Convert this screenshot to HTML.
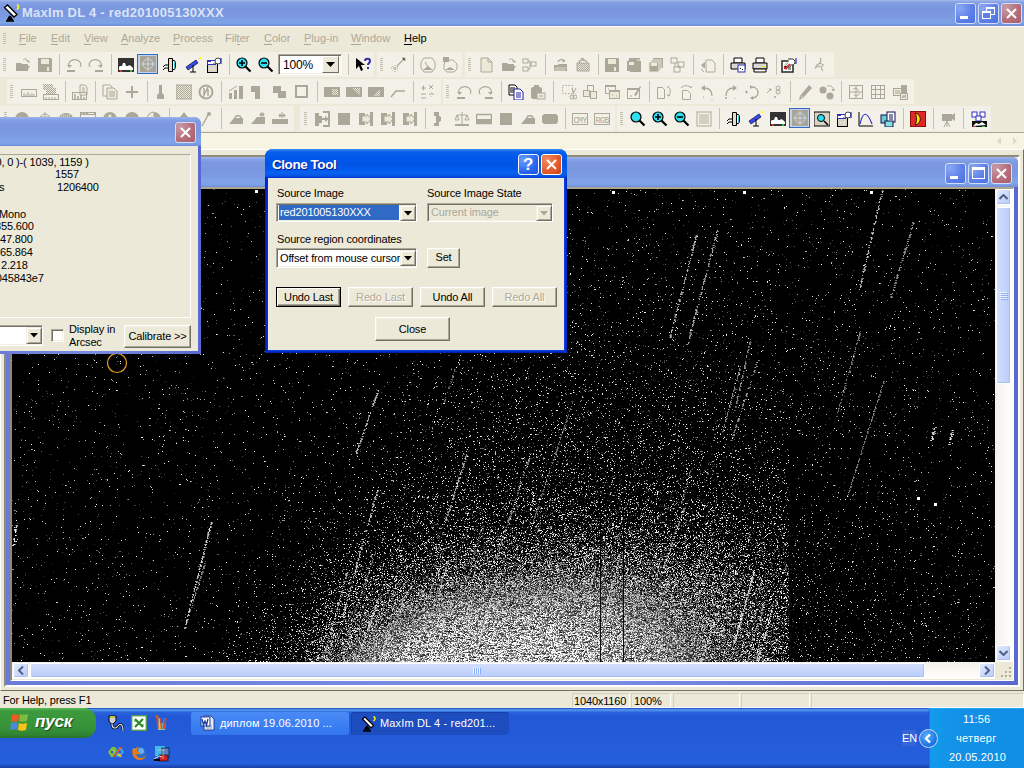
<!DOCTYPE html><html><head><meta charset="utf-8"><style>*{margin:0;padding:0;box-sizing:border-box}
html,body{width:1024px;height:768px;overflow:hidden;background:#ECE9D8;font-family:"Liberation Sans",sans-serif;font-size:11px;color:#000;position:relative;letter-spacing:-0.15px}
.a{position:absolute}
.nw{white-space:nowrap}
#title{left:0;top:0;width:1024px;height:26px;background:linear-gradient(#a7bdef 0,#93ade9 1px,#819ee2 3px,#7a96df 8px,#7a97df 14px,#7ea1e5 21px,#7fa4e6 23px,#7492dd 25px,#6d86d8 26px)}
.tt{font-weight:bold;font-size:13px;color:#d9e3f7;letter-spacing:0.25px}
.tbtn{width:21px;height:21px;border:1px solid #d3ddf6;border-radius:3px;background:radial-gradient(circle at 20% 20%,#8aa8f3,#5c7fe8 60%,#4a6fe3)}
.tbtn.x{background:radial-gradient(circle at 20% 20%,#c79aa6,#b46c79 60%,#a85e6c)}
.menu{top:32px;color:#aca899;letter-spacing:0}
.menu u{text-decoration:none;border-bottom:1px solid #aca899}
.btn{background:linear-gradient(#fff,#ecebe6 20%,#e3e1d9 80%,#d6d0c5);border:1px solid #003c74;border-radius:3px;text-align:center}
.cbtn{background:#ece9d8;border:1px solid;border-color:#fff #716f64 #716f64 #fff;box-shadow:inset -1px -1px #aca899, inset 1px 1px #f1efe2;text-align:center}
.cbtn.def{border:1px solid #000;box-shadow:inset 1px 1px #fff,inset -1px -1px #716f64,inset -2px -2px #aca899}
.dis{color:#aca899;text-shadow:1px 1px #fff}
.sunk{border:1px solid;border-color:#aca899 #fff #fff #aca899;box-shadow:inset 1px 1px #716f64,inset -1px -1px #f1efe2}
.ddb{background:#ece9d8;border:1px solid;border-color:#f1efe2 #716f64 #716f64 #f1efe2;box-shadow:inset 1px 1px #fff,inset -1px -1px #aca899}
.sbb{border:1px solid #fff;border-radius:2px;background:linear-gradient(135deg,#e2ebfd,#c8d7fb 60%,#b8cbf7);box-shadow:inset -1px -1px #a9bff0}
.sp{height:15px;border:1px solid;border-color:#d4d0c0 #fff #fff #d4d0c0}
</style></head><body>
<svg width="0" height="0" style="position:absolute"><defs><pattern id="hp" width="2" height="2" patternUnits="userSpaceOnUse"><rect width="2" height="2" fill="#ece9d8"/><rect width="1" height="1" fill="#aca899"/><rect x="1" y="1" width="1" height="1" fill="#aca899"/></pattern></defs></svg>
<div id="title" class="a">
  <svg class="a" style="left:3px;top:4px" width="17" height="18" viewBox="0 0 17 18"><path d="M1.5 3.5 L4.5 1 L14 10.5 L11 13 Z" fill="#fff" stroke="#000" stroke-width="1.3"/><path d="M7 12 L4 17 M7 12 L10 17 M7 12 V17 M3 17 H11" stroke="#000" stroke-width="1.7"/><path d="M14 0.5c2 1 2 3.5 0 5" stroke="#ff0" stroke-width="1.6" fill="none"/></svg>
  <div class="a tt nw" style="left:22px;top:5px">MaxIm DL 4 - red201005130XXX</div>
  <div class="a tbtn" style="left:955px;top:3px"><div class="a" style="left:4px;top:12px;width:8px;height:3px;background:#fff"></div></div>
  <div class="a tbtn" style="left:978px;top:3px">
    <div class="a" style="left:7px;top:3px;width:9px;height:8px;border:1px solid #fff;border-top-width:2px"></div>
    <div class="a" style="left:3px;top:7px;width:9px;height:8px;border:1px solid #fff;border-top-width:2px;background:#5e80e8"></div>
  </div>
  <div class="a tbtn x" style="left:1001px;top:3px">
    <svg class="a" style="left:3px;top:3px" width="13" height="13"><path d="M2 2 L11 11 M11 2 L2 11" stroke="#fff" stroke-width="2"/></svg>
  </div>
</div>
<div class="a" style="left:0;top:26px;width:1024px;height:1px;background:#fff"></div>
<div class="a" style="left:3px;top:33px;width:3px;height:12px;background:repeating-linear-gradient(#c3bfae 0 1px,transparent 1px 2px)"></div>
<div class="a menu nw" style="left:19px"><u>F</u>ile</div>
<div class="a menu nw" style="left:51px"><u>E</u>dit</div>
<div class="a menu nw" style="left:84px"><u>V</u>iew</div>
<div class="a menu nw" style="left:121px"><u>A</u>nalyze</div>
<div class="a menu nw" style="left:173px"><u>P</u>rocess</div>
<div class="a menu nw" style="left:225px">Fil<u>t</u>er</div>
<div class="a menu nw" style="left:264px"><u>C</u>olor</div>
<div class="a menu nw" style="left:304px"><u>P</u>lug-in</div>
<div class="a menu nw" style="left:351px"><u>W</u>indow</div>
<div class="a menu nw" style="left:404px;color:#000"><span style="border-bottom:1px solid #000">H</span>elp</div>

<div class="a" style="left:0px;top:52px;width:374px;height:25px;background:#f3f1e7"></div>
<div class="a" style="left:377px;top:52px;width:85px;height:25px;background:#f3f1e7"></div>
<div class="a" style="left:465px;top:52px;width:369px;height:25px;background:#f3f1e7"></div>
<div class="a" style="left:3px;top:58px;width:3px;height:14px;background:repeating-linear-gradient(#c3bfae 0 1px,transparent 1px 2px)"></div>
<div class="a" style="left:380px;top:58px;width:3px;height:14px;background:repeating-linear-gradient(#c3bfae 0 1px,transparent 1px 2px)"></div>
<div class="a" style="left:468px;top:58px;width:3px;height:14px;background:repeating-linear-gradient(#c3bfae 0 1px,transparent 1px 2px)"></div>
<div class="a" style="left:7px;top:79px;width:434px;height:25px;background:#f3f1e7"></div>
<div class="a" style="left:443px;top:79px;width:471px;height:25px;background:#f3f1e7"></div>
<div class="a" style="left:10px;top:85px;width:3px;height:14px;background:repeating-linear-gradient(#c3bfae 0 1px,transparent 1px 2px)"></div>
<div class="a" style="left:446px;top:85px;width:3px;height:14px;background:repeating-linear-gradient(#c3bfae 0 1px,transparent 1px 2px)"></div>
<div class="a" style="left:0px;top:106px;width:294px;height:25px;background:#f3f1e7"></div>
<div class="a" style="left:300px;top:106px;width:315px;height:25px;background:#f3f1e7"></div>
<div class="a" style="left:617px;top:106px;width:374px;height:25px;background:#f3f1e7"></div>
<div class="a" style="left:4px;top:112px;width:3px;height:14px;background:repeating-linear-gradient(#c3bfae 0 1px,transparent 1px 2px)"></div>
<div class="a" style="left:304px;top:112px;width:3px;height:14px;background:repeating-linear-gradient(#c3bfae 0 1px,transparent 1px 2px)"></div>
<div class="a" style="left:620px;top:112px;width:3px;height:14px;background:repeating-linear-gradient(#c3bfae 0 1px,transparent 1px 2px)"></div>
<svg class="a" style="left:15px;top:57px" width="16" height="16" viewBox="0 0 16 16"><path d="M1 6h5l1 1h6v7H1z" fill="#aca899"/><path d="M3 9h12l-3 5H1z" fill="#aca899"/><path d="M8 3c2-2 5-1 5 2" stroke="#aca899" fill="none"/><path d="M11 4h3v2" stroke="#aca899" fill="none"/></svg>
<svg class="a" style="left:37px;top:57px" width="16" height="16" viewBox="0 0 16 16"><path d="M1 1h13l1 1v13H1z" fill="#aca899"/><rect x="4" y="2" width="8" height="5" fill="#ece9d8"/><rect x="10" y="10" width="2" height="4" fill="#ece9d8"/></svg>
<div class="a" style="left:59px;top:54px;width:1px;height:21px;background:#c5c2b2"></div>
<svg class="a" style="left:66px;top:57px" width="16" height="16" viewBox="0 0 16 16"><path d="M3 9 A6 5 0 1 1 14 10" stroke="#aca899" fill="none" stroke-width="1.2"/><path d="M1 8h5l-2.5 3z" fill="#aca899"/><rect x="1" y="13" width="8" height="2" fill="#aca899"/></svg>
<svg class="a" style="left:88px;top:57px" width="16" height="16" viewBox="0 0 16 16"><path d="M2 10 A6 5 0 1 1 13 9" stroke="#aca899" fill="none" stroke-width="1.2"/><path d="M10 8h5l-2.5 3z" fill="#aca899"/><rect x="7" y="13" width="8" height="2" fill="#aca899"/></svg>
<div class="a" style="left:111px;top:54px;width:1px;height:21px;background:#c5c2b2"></div>
<svg class="a" style="left:118px;top:57px" width="16" height="16" viewBox="0 0 16 16"><rect x="0" y="1" width="16" height="14" fill="#333"/><path d="M1 13 V10 L2 9 L4 9 L5 6 L7 6 L8 9 L10 9 L11 8 L13 9 L15 11 L15 13Z" fill="#fff"/><rect x="2" y="13" width="2" height="2" fill="#e03030"/><rect x="12" y="13" width="2" height="2" fill="#30c040"/></svg>
<svg class="a" style="left:162px;top:57px" width="16" height="16" viewBox="0 0 16 16"><path d="M6.5 1.5h4v13h-4z" fill="#e8dcc0" stroke="#000"/><path d="M10.5 3.5h2l1 2v5l-1 2h-2z" fill="#fff" stroke="#000"/><rect x="12" y="5" width="1" height="6" fill="#3cd"/><path d="M1 10l2-2h3M1 13l2-2h3" stroke="#000" fill="none"/></svg>
<svg class="a" style="left:185px;top:57px" width="16" height="16" viewBox="0 0 16 16"><path d="M1 10 L11 3 L13 6 L3 13Z" fill="#3a4ad8" stroke="#1a1a70" stroke-width=".8"/><path d="M8 8v7M5 15h6" stroke="#000"/><rect x="14" y="0" width="2" height="2" fill="#ff0"/></svg>
<svg class="a" style="left:206px;top:57px" width="16" height="16" viewBox="0 0 16 16"><rect x="1.5" y="6.5" width="10" height="9" fill="#d8d4c4" stroke="#000"/><path d="M4 12h1M8 11h1M7 13h1" stroke="#fff"/><rect x="1.5" y="3.5" width="8" height="4" fill="#fff" stroke="#3030c0"/><rect x="2" y="4" width="3" height="1" fill="#3030c0"/><circle cx="12" cy="4" r="3" fill="#fff" stroke="#444"/><path d="M15 1v6" stroke="#3030c0" stroke-width="1.2"/><path d="M7 7l3-2" stroke="#888"/></svg>
<div class="a" style="left:229px;top:54px;width:1px;height:21px;background:#c5c2b2"></div>
<svg class="a" style="left:236px;top:57px" width="16" height="16" viewBox="0 0 16 16"><circle cx="6" cy="6" r="5" fill="#2ee0f0" stroke="#000" stroke-width="1.2"/><path d="M3 6h6M6 3v6" stroke="#000" stroke-width="1.6"/><path d="M9.5 9.5l5 5" stroke="#000" stroke-width="2.2"/></svg>
<svg class="a" style="left:258px;top:57px" width="16" height="16" viewBox="0 0 16 16"><circle cx="6" cy="6" r="5" fill="#2ee0f0" stroke="#000" stroke-width="1.2"/><path d="M3 6h6" stroke="#000" stroke-width="1.6"/><path d="M9.5 9.5l5 5" stroke="#000" stroke-width="2.2"/></svg>
<div class="a" style="left:348px;top:54px;width:1px;height:21px;background:#c5c2b2"></div>
<svg class="a" style="left:355px;top:57px" width="16" height="16" viewBox="0 0 16 16"><path d="M1 1 L1 12 L4 9 L6 14 L8 13 L6 8 L10 8Z" fill="#000"/><path d="M10 4c0-3 5-3 5 0 0 2-2 2-2 4" stroke="#3030a0" stroke-width="2" fill="none"/><rect x="12" y="10" width="2" height="2" fill="#3030a0"/></svg>
<svg class="a" style="left:390px;top:57px" width="16" height="16" viewBox="0 0 16 16"><path d="M7 9 L14 2" stroke="#aca899" stroke-width="1.3"/><path d="M12 1h3v3" stroke="#aca899"/><path d="M5 8v7M1 11h8M2 9l6 5M8 9l-6 5" stroke="#aca899" stroke-dasharray="1 1"/></svg>
<div class="a" style="left:413px;top:54px;width:1px;height:21px;background:#c5c2b2"></div>
<svg class="a" style="left:420px;top:57px" width="16" height="16" viewBox="0 0 16 16"><path d="M4 1h8l3 4v6l-3 4H4l-3-4V5z" fill="none" stroke="#aca899"/><path d="M3 13 L8 9 L13 13Z" fill="#aca899"/><path d="M8 10L5 5" stroke="#aca899"/></svg>
<svg class="a" style="left:442px;top:57px" width="16" height="16" viewBox="0 0 16 16"><path d="M4 3h7l4 4v5l-3 3H5l-3-3V7z" fill="none" stroke="#aca899"/><path d="M3 13 L8 10 L13 13Z" fill="#aca899"/><rect x="1" y="0" width="6" height="5" fill="#aca899"/></svg>
<svg class="a" style="left:479px;top:57px" width="16" height="16" viewBox="0 0 16 16"><path d="M2 1h7l4 4v10H2z" fill="#ece9d8" stroke="#aca899"/><path d="M9 1v4h4" stroke="#aca899" fill="none"/></svg>
<svg class="a" style="left:501px;top:57px" width="16" height="16" viewBox="0 0 16 16"><path d="M1 6h5l1 1h6v7H1z" fill="#aca899"/><path d="M3 9h12l-3 5H1z" fill="#aca899"/><path d="M8 3c2-2 5-1 5 2" stroke="#aca899" fill="none"/><path d="M11 4h3v2" stroke="#aca899" fill="none"/></svg>
<svg class="a" style="left:522px;top:57px" width="16" height="16" viewBox="0 0 16 16"><rect x="1" y="2" width="5" height="4" fill="none" stroke="#aca899"/><rect x="9" y="5" width="5" height="4" fill="none" stroke="#aca899"/><rect x="1" y="10" width="5" height="4" fill="none" stroke="#aca899"/><path d="M6 4h2v8H6M8 7h1" stroke="#aca899" fill="none"/></svg>
<div class="a" style="left:545px;top:54px;width:1px;height:21px;background:#c5c2b2"></div>
<svg class="a" style="left:553px;top:57px" width="16" height="16" viewBox="0 0 16 16"><path d="M1 8h4l1-1h8v7H1z" fill="#aca899"/><path d="M2 10h12l-2 4H1z" fill="#c4c0b0"/><path d="M5 5c1-3 5-3 6-1" stroke="#aca899" fill="none" stroke-width="1.3"/><path d="M9 2l3 2-3 1" stroke="#aca899" fill="none"/></svg>
<svg class="a" style="left:575px;top:57px" width="16" height="16" viewBox="0 0 16 16"><path d="M2 6h12v8H2z" fill="url(#hp)" stroke="#aca899"/><path d="M4 6c0-4 6-4 8-1" stroke="#aca899" fill="none" stroke-width="1.3"/><path d="M6 1l3 1-2 2" stroke="#aca899" fill="none"/></svg>
<div class="a" style="left:598px;top:54px;width:1px;height:21px;background:#c5c2b2"></div>
<svg class="a" style="left:604px;top:57px" width="16" height="16" viewBox="0 0 16 16"><path d="M1 1h13l1 1v13H1z" fill="#aca899"/><rect x="4" y="2" width="8" height="5" fill="#ece9d8"/><rect x="10" y="10" width="2" height="4" fill="#ece9d8"/></svg>
<svg class="a" style="left:626px;top:57px" width="16" height="16" viewBox="0 0 16 16"><path d="M3 1h11v3h1v11H4V4H1v10" fill="#aca899"/><rect x="1" y="4" width="10" height="10" fill="#aca899"/><rect x="3" y="5" width="5" height="3" fill="#ece9d8"/><path d="M12 2v2M14 2v2" stroke="#ece9d8"/></svg>
<svg class="a" style="left:648px;top:57px" width="16" height="16" viewBox="0 0 16 16"><rect x="5" y="1" width="10" height="10" fill="#aca899"/><rect x="3" y="3" width="10" height="10" fill="#aca899" stroke="#ece9d8"/><rect x="1" y="5" width="10" height="10" fill="#aca899" stroke="#ece9d8"/><rect x="3" y="6" width="6" height="3" fill="#ece9d8"/></svg>
<svg class="a" style="left:670px;top:57px" width="16" height="16" viewBox="0 0 16 16"><rect x="1" y="1" width="6" height="5" fill="none" stroke="#aca899"/><rect x="8" y="5" width="6" height="5" fill="none" stroke="#aca899"/><rect x="4" y="10" width="6" height="5" fill="none" stroke="#aca899"/><path d="M5 6v4M9 10V8" stroke="#aca899"/></svg>
<div class="a" style="left:693px;top:54px;width:1px;height:21px;background:#c5c2b2"></div>
<svg class="a" style="left:700px;top:57px" width="16" height="16" viewBox="0 0 16 16"><path d="M6 3h6l3 3v9H6z" fill="none" stroke="#aca899"/><path d="M1 8l4-3v6z" fill="#aca899"/><path d="M1 12l3 3M2 10h3" stroke="#aca899"/></svg>
<div class="a" style="left:723px;top:54px;width:1px;height:21px;background:#c5c2b2"></div>
<svg class="a" style="left:730px;top:57px" width="16" height="16" viewBox="0 0 16 16"><path d="M4 1h8v5H4z" fill="#fff" stroke="#000"/><path d="M1 6h14v6H1z" fill="#d8d8d8" stroke="#000"/><rect x="8" y="8" width="7" height="7" fill="#fff" stroke="#3030a0"/><rect x="10" y="11" width="1" height="1" fill="#000"/><rect x="12" y="12" width="1" height="1" fill="#000"/></svg>
<svg class="a" style="left:752px;top:57px" width="16" height="16" viewBox="0 0 16 16"><path d="M4 1h8v5H4z" fill="#fff" stroke="#000"/><path d="M1 6h14v6H1z" fill="#d8d8d8" stroke="#000"/><path d="M2 12h12v3H2z" fill="#fff" stroke="#000"/><rect x="10" y="9" width="3" height="1" fill="#ee0"/></svg>
<div class="a" style="left:776px;top:54px;width:1px;height:21px;background:#c5c2b2"></div>
<svg class="a" style="left:781px;top:57px" width="16" height="16" viewBox="0 0 16 16"><rect x="1" y="4" width="11" height="11" fill="#fff" stroke="#333" stroke-width="1.6"/><path d="M3 8l3-3 4 4-3 3z" fill="url(#hp)"/><path d="M7 2h5l2 2v2l-2 2H9" fill="#fff" stroke="#333"/><path d="M15 1v6" stroke="#3030c0" stroke-width="1.2"/><rect x="3" y="9" width="3" height="3" fill="#333"/><path d="M3 10l2 2 4-5" stroke="#f02020" stroke-width="1.4" fill="none"/><path d="M7 10h3M7 12h3" stroke="#333"/></svg>
<div class="a" style="left:805px;top:54px;width:1px;height:21px;background:#c5c2b2"></div>
<svg class="a" style="left:812px;top:57px" width="16" height="16" viewBox="0 0 16 16"><path d="M8 1l1 2-1 3 3 2-2 3 2 3M8 6l-3 2-2 4M8 9l-4 1" stroke="#aca899" stroke-width="1.4" fill="none" stroke-dasharray="2 0.6"/></svg>
<svg class="a" style="left:21px;top:84px" width="16" height="16" viewBox="0 0 16 16"><rect x="0.5" y="5.5" width="15" height="7" fill="none" stroke="#aca899"/><path d="M3 12V9M5 12v-2M7 12V8M9 12v-2M11 12V9M13 12v-2" stroke="#aca899"/></svg>
<svg class="a" style="left:43px;top:84px" width="16" height="16" viewBox="0 0 16 16"><rect x="0" y="0" width="10" height="6" fill="url(#hp)"/><rect x="3" y="4" width="10" height="6" fill="url(#hp)"/><rect x="0.5" y="10.5" width="15" height="5" fill="none" stroke="#aca899"/><path d="M3 15v-2M6 15v-2M9 15v-2M12 15v-2" stroke="#aca899"/></svg>
<div class="a" style="left:65px;top:81px;width:1px;height:21px;background:#c5c2b2"></div>
<svg class="a" style="left:72px;top:84px" width="16" height="16" viewBox="0 0 16 16"><path d="M8 1h5l2 2v8H8z" fill="none" stroke="#aca899"/><path d="M10 4h3M10 6h3M10 8h3" stroke="#aca899"/><rect x="0.5" y="8.5" width="14" height="7" fill="none" stroke="#aca899"/><path d="M3 15v-5M6 15v-3M9 15v-4M12 15v-2" stroke="#aca899" stroke-width="1.5"/></svg>
<div class="a" style="left:95px;top:81px;width:1px;height:21px;background:#c5c2b2"></div>
<svg class="a" style="left:102px;top:84px" width="16" height="16" viewBox="0 0 16 16"><path d="M1 1h7l2 2v9H1z" fill="none" stroke="#aca899"/><path d="M5 4h7l3 3v8H5z" fill="#ece9d8" stroke="#aca899"/><path d="M7 8h6M7 10h6M7 12h6" stroke="#aca899"/></svg>
<svg class="a" style="left:124px;top:84px" width="16" height="16" viewBox="0 0 16 16"><path d="M8 2v12M2 8h12" stroke="#aca899" stroke-width="2"/></svg>
<div class="a" style="left:147px;top:81px;width:1px;height:21px;background:#c5c2b2"></div>
<svg class="a" style="left:153px;top:84px" width="16" height="16" viewBox="0 0 16 16"><path d="M6 1h3v8l2 2v4H4v-4l2-2z" fill="#aca899"/></svg>
<svg class="a" style="left:176px;top:84px" width="16" height="16" viewBox="0 0 16 16"><rect x="0" y="1" width="16" height="14" fill="url(#hp)" stroke="#aca899"/><rect x="5" y="4" width="6" height="8" fill="url(#hp)"/></svg>
<svg class="a" style="left:198px;top:84px" width="16" height="16" viewBox="0 0 16 16"><circle cx="8" cy="8" r="6.5" fill="none" stroke="#aca899" stroke-width="2"/><path d="M10 3L5 13M6 4v7M10 5v7" stroke="#aca899" stroke-width="1.5"/></svg>
<div class="a" style="left:221px;top:81px;width:1px;height:21px;background:#c5c2b2"></div>
<svg class="a" style="left:228px;top:84px" width="16" height="16" viewBox="0 0 16 16"><rect x="1" y="9" width="3" height="6" fill="#aca899"/><rect x="6" y="6" width="3" height="9" fill="#aca899"/><rect x="11" y="2" width="4" height="13" fill="#aca899"/><path d="M1 7l8-5" stroke="#aca899"/></svg>
<svg class="a" style="left:250px;top:84px" width="16" height="16" viewBox="0 0 16 16"><rect x="1" y="2" width="9" height="6" fill="#aca899"/><rect x="5" y="5" width="5" height="10" fill="#aca899"/></svg>
<svg class="a" style="left:272px;top:84px" width="16" height="16" viewBox="0 0 16 16"><rect x="1" y="2" width="8" height="7" fill="#aca899"/><rect x="6" y="7" width="8" height="7" fill="#aca899"/></svg>
<svg class="a" style="left:294px;top:84px" width="16" height="16" viewBox="0 0 16 16"><rect x="2" y="2" width="11" height="11" fill="none" stroke="#aca899" stroke-width="2"/></svg>
<div class="a" style="left:317px;top:81px;width:1px;height:21px;background:#c5c2b2"></div>
<svg class="a" style="left:324px;top:84px" width="16" height="16" viewBox="0 0 16 16"><rect x="0" y="3" width="16" height="10" fill="#aca899"/><rect x="8" y="5" width="6" height="6" fill="url(#hp)"/></svg>
<svg class="a" style="left:346px;top:84px" width="16" height="16" viewBox="0 0 16 16"><rect x="0" y="3" width="16" height="10" fill="#aca899"/><path d="M6 4l8 7V4z" fill="url(#hp)"/></svg>
<svg class="a" style="left:368px;top:84px" width="16" height="16" viewBox="0 0 16 16"><rect x="0" y="3" width="16" height="10" fill="#aca899"/><path d="M5 12l7-7v7z" fill="url(#hp)"/></svg>
<svg class="a" style="left:390px;top:84px" width="16" height="16" viewBox="0 0 16 16"><path d="M1 13l5-6h9" stroke="#aca899" stroke-width="1.5" fill="none"/></svg>
<div class="a" style="left:413px;top:81px;width:1px;height:21px;background:#c5c2b2"></div>
<svg class="a" style="left:420px;top:84px" width="16" height="16" viewBox="0 0 16 16"><path d="M1 4h5M3.5 1.5v5M9 1l4 4M13 1l-4 4M1 10h5M9 10h5M11.5 8v0.5M11.5 12v0.5" stroke="#aca899"/><path d="M1 14h5" stroke="#aca899"/></svg>
<svg class="a" style="left:456px;top:84px" width="16" height="16" viewBox="0 0 16 16"><path d="M3 9 A6 5 0 1 1 14 10" stroke="#aca899" fill="none" stroke-width="1.2"/><path d="M1 8h5l-2.5 3z" fill="#aca899"/><rect x="1" y="13" width="8" height="2" fill="#aca899"/></svg>
<svg class="a" style="left:478px;top:84px" width="16" height="16" viewBox="0 0 16 16"><path d="M2 10 A6 5 0 1 1 13 9" stroke="#aca899" fill="none" stroke-width="1.2"/><path d="M10 8h5l-2.5 3z" fill="#aca899"/><rect x="7" y="13" width="8" height="2" fill="#aca899"/></svg>
<div class="a" style="left:501px;top:81px;width:1px;height:21px;background:#c5c2b2"></div>
<svg class="a" style="left:508px;top:84px" width="16" height="16" viewBox="0 0 16 16"><path d="M1 1h6l2 2v8H1z" fill="#fff" stroke="#000"/><path d="M2 4h5M2 6h5M2 8h5" stroke="#000"/><path d="M6 5h6l3 3v8H6z" fill="#fff" stroke="#2020a0"/><path d="M8 9h5M8 11h5M8 13h5" stroke="#2020a0"/></svg>
<svg class="a" style="left:530px;top:84px" width="16" height="16" viewBox="0 0 16 16"><rect x="1" y="3" width="11" height="12" rx="2" fill="#aca899"/><rect x="4" y="1" width="5" height="3" fill="#aca899"/><rect x="7" y="9" width="8" height="6" fill="#ece9d8" stroke="#aca899"/><path d="M9 12h4" stroke="#aca899"/></svg>
<div class="a" style="left:553px;top:81px;width:1px;height:21px;background:#c5c2b2"></div>
<svg class="a" style="left:561px;top:84px" width="16" height="16" viewBox="0 0 16 16"><rect x="1.5" y="1.5" width="10" height="8" fill="none" stroke="#aca899" stroke-dasharray="1.5 1.5"/><path d="M11 4l2 6M15 4l-3 6" stroke="#aca899"/><circle cx="11" cy="13" r="2" fill="none" stroke="#aca899"/><circle cx="14" cy="13" r="2" fill="none" stroke="#aca899"/></svg>
<svg class="a" style="left:582px;top:84px" width="16" height="16" viewBox="0 0 16 16"><rect x="5.5" y="1.5" width="6" height="6" fill="none" stroke="#aca899"/><rect x="1.5" y="6.5" width="6" height="6" fill="#ece9d8" stroke="#aca899"/><rect x="8.5" y="7.5" width="6" height="7" fill="#ece9d8" stroke="#aca899"/></svg>
<svg class="a" style="left:604px;top:84px" width="16" height="16" viewBox="0 0 16 16"><rect x="1.5" y="1.5" width="10" height="8" fill="none" stroke="#aca899"/><rect x="1" y="1" width="11" height="2" fill="#aca899"/><rect x="5.5" y="6.5" width="10" height="8" fill="#ece9d8" stroke="#aca899"/><rect x="5" y="6" width="11" height="2" fill="#aca899"/><path d="M8 11h1M12 12h1M4 5h1" stroke="#aca899"/></svg>
<svg class="a" style="left:626px;top:84px" width="16" height="16" viewBox="0 0 16 16"><rect x="1.5" y="4.5" width="12" height="10" fill="none" stroke="#aca899"/><rect x="1" y="4" width="13" height="2" fill="#aca899"/><path d="M8 11l6-9 1 1-5 9z" fill="#aca899"/><path d="M4 12h2" stroke="#aca899"/></svg>
<div class="a" style="left:649px;top:81px;width:1px;height:21px;background:#c5c2b2"></div>
<svg class="a" style="left:656px;top:84px" width="16" height="16" viewBox="0 0 16 16"><path d="M1.5 3.5h5l2 2v9h-7z" fill="none" stroke="#aca899"/><path d="M12 3c3 1 3 7 0 9M11 10l1 2 2-1M13 3l-2 0" stroke="#aca899" fill="none"/></svg>
<svg class="a" style="left:678px;top:84px" width="16" height="16" viewBox="0 0 16 16"><path d="M4.5 6.5h5l3 3v6h-8z" fill="none" stroke="#aca899"/><path d="M3 4c2-3 8-3 10 0M11 2l2 2 1-2" stroke="#aca899" fill="none"/></svg>
<svg class="a" style="left:700px;top:84px" width="16" height="16" viewBox="0 0 16 16"><path d="M4 4c5 0 8 2 8 8" stroke="#aca899" fill="none" stroke-width="1.3"/><path d="M1 4l4-3v6z" fill="#aca899"/><path d="M3 13h1M12 15v1" stroke="#aca899"/></svg>
<svg class="a" style="left:722px;top:84px" width="16" height="16" viewBox="0 0 16 16"><path d="M12 4c-5 0-8 2-8 8" stroke="#aca899" fill="none" stroke-width="1.3"/><path d="M15 4l-4-3v6z" fill="#aca899"/><path d="M3 14h2M4 13v2M13 14v1" stroke="#aca899"/></svg>
<svg class="a" style="left:744px;top:84px" width="16" height="16" viewBox="0 0 16 16"><path d="M8 3c4 0 6 3 6 6s-3 5-6 5" stroke="#aca899" fill="none" stroke-width="1.3"/><path d="M6 1l3 2-3 2zM9 12l-3 2 3 2z" fill="#aca899"/><path d="M1 8h3M2.5 6.5v3" stroke="#aca899"/></svg>
<svg class="a" style="left:766px;top:84px" width="16" height="16" viewBox="0 0 16 16"><path d="M1 9l4-4M3 5h2v2" stroke="#aca899" fill="none"/><circle cx="12" cy="4" r="2" fill="none" stroke="#aca899"/><circle cx="12" cy="8" r="2" fill="none" stroke="#aca899"/><path d="M8 13h2M9 12v2" stroke="#aca899"/></svg>
<div class="a" style="left:790px;top:81px;width:1px;height:21px;background:#c5c2b2"></div>
<svg class="a" style="left:797px;top:84px" width="16" height="16" viewBox="0 0 16 16"><path d="M12 1l3 3-9 10-4 2 1-4z" fill="#aca899"/><path d="M4 12l2 2" stroke="#ece9d8"/></svg>
<svg class="a" style="left:819px;top:84px" width="16" height="16" viewBox="0 0 16 16"><circle cx="4" cy="6" r="3.5" fill="#aca899"/><circle cx="11" cy="12" r="3.5" fill="#aca899"/><path d="M8 2c4-1 7 1 6 5M13 5l1 2 2-2" stroke="#aca899" fill="none"/></svg>
<div class="a" style="left:841px;top:81px;width:1px;height:21px;background:#c5c2b2"></div>
<svg class="a" style="left:848px;top:84px" width="16" height="16" viewBox="0 0 16 16"><rect x="1.5" y="1.5" width="13" height="13" fill="none" stroke="#aca899"/><path d="M8 1v14M1 8h14" stroke="#aca899"/><path d="M5 5c3-2 6 0 5 2M6 11c3 2 6 0 5-2" stroke="#aca899" fill="none"/></svg>
<svg class="a" style="left:870px;top:84px" width="16" height="16" viewBox="0 0 16 16"><rect x="1.5" y="1.5" width="13" height="13" fill="none" stroke="#aca899"/><path d="M5.5 1v14M10.5 1v14M1 5.5h14M1 10.5h14" stroke="#aca899"/></svg>
<svg class="a" style="left:892px;top:84px" width="16" height="16" viewBox="0 0 16 16"><rect x="9" y="1" width="6" height="9" fill="#aca899"/><rect x="1.5" y="4.5" width="8" height="7" fill="#ece9d8" stroke="#aca899"/><path d="M3 7h5M3 9h5" stroke="#aca899"/><rect x="8.5" y="9.5" width="7" height="6" fill="#ece9d8" stroke="#aca899"/><path d="M10 12h4l-1-1M14 13h-4l1 1" stroke="#aca899" fill="none"/></svg>
<svg class="a" style="left:14px;top:111px" width="16" height="16" viewBox="0 0 16 16"><circle cx="8" cy="8" r="7" fill="#aca899"/></svg>
<svg class="a" style="left:37px;top:111px" width="16" height="16" viewBox="0 0 16 16"><path d="M8 1v14M3 6h10" stroke="#aca899"/><path d="M3 8a5 5 0 0 1 10 0v7H3z" fill="none" stroke="#aca899"/></svg>
<svg class="a" style="left:58px;top:111px" width="16" height="16" viewBox="0 0 16 16"><path d="M1 14v-6c0-4 3-6 7-6s7 2 7 6v6z" fill="#aca899"/><path d="M3 4h10M3 6h10" stroke="#ece9d8" stroke-dasharray="1 1"/></svg>
<svg class="a" style="left:80px;top:111px" width="16" height="16" viewBox="0 0 16 16"><rect x="0.5" y="1.5" width="15" height="13" fill="none" stroke="#aca899"/><rect x="0" y="1" width="16" height="3" fill="#aca899"/><path d="M2 2.5h1M5 2.5h1M8 2.5h6" stroke="#ece9d8"/><path d="M3 12l3-3 3 2 4-3" stroke="#aca899" fill="none"/></svg>
<svg class="a" style="left:102px;top:111px" width="16" height="16" viewBox="0 0 16 16"><circle cx="8" cy="8" r="7" fill="#aca899"/><circle cx="8" cy="5" r="1.5" fill="#ece9d8"/></svg>
<svg class="a" style="left:124px;top:111px" width="16" height="16" viewBox="0 0 16 16"><circle cx="8" cy="8" r="7" fill="#aca899"/></svg>
<svg class="a" style="left:146px;top:111px" width="16" height="16" viewBox="0 0 16 16"><circle cx="8" cy="8" r="7" fill="#aca899"/><path d="M8 1a7 7 0 0 0 -7 7h7z" fill="#ece9d8"/><path d="M8 1a7 7 0 0 0 -7 7h7z" fill="none" stroke="#aca899"/></svg>
<div class="a" style="left:169px;top:108px;width:1px;height:21px;background:#c5c2b2"></div>
<svg class="a" style="left:176px;top:111px" width="16" height="16" viewBox="0 0 16 16"><path d="M8 1l7 9H1z" fill="#aca899"/></svg>
<svg class="a" style="left:198px;top:111px" width="16" height="16" viewBox="0 0 16 16"><circle cx="11" cy="3" r="2" fill="#aca899"/><path d="M10 4L4 15" stroke="#aca899" stroke-width="1.5"/></svg>
<div class="a" style="left:221px;top:108px;width:1px;height:21px;background:#c5c2b2"></div>
<svg class="a" style="left:228px;top:111px" width="16" height="16" viewBox="0 0 16 16"><path d="M1 13l5-6h9v6z" fill="#aca899"/><path d="M7 7c0-3 6-3 6 0" stroke="#aca899" fill="none" stroke-width="1.3"/></svg>
<svg class="a" style="left:250px;top:111px" width="16" height="16" viewBox="0 0 16 16"><path d="M1 13l6-7h8v7z" fill="#aca899"/><path d="M12 1v5M10 2l4 3M14 2l-4 3M9.5 3.5h5" stroke="#aca899"/></svg>
<svg class="a" style="left:272px;top:111px" width="16" height="16" viewBox="0 0 16 16"><rect x="0" y="8" width="16" height="5" fill="#aca899"/><path d="M10 1v6M7 3l6 3M13 3l-6 3M6.5 4.5h7" stroke="#aca899"/></svg>
<svg class="a" style="left:314px;top:111px" width="16" height="16" viewBox="0 0 16 16"><path d="M1 2h4v3h3v2l3 0 0-2 4 3-4 3v-2H8v3H5v3H1z" fill="#aca899"/><path d="M9 1h6v14H9" stroke="#aca899" stroke-width="2" fill="none"/></svg>
<svg class="a" style="left:336px;top:111px" width="16" height="16" viewBox="0 0 16 16"><rect x="2" y="2" width="12" height="12" fill="#aca899"/></svg>
<svg class="a" style="left:358px;top:111px" width="16" height="16" viewBox="0 0 16 16"><rect x="1" y="2" width="6" height="12" fill="#aca899"/><path d="M4 5h5V3l4 5-4 5v-2H4z" fill="#ece9d8" stroke="#aca899"/><rect x="12" y="1" width="3" height="14" fill="#aca899"/></svg>
<svg class="a" style="left:380px;top:111px" width="16" height="16" viewBox="0 0 16 16"><rect x="1" y="2" width="6" height="12" fill="#aca899"/><path d="M4 5h5V3l4 5-4 5v-2H4z" fill="#ece9d8" stroke="#aca899"/><rect x="12" y="1" width="3" height="14" fill="#aca899"/></svg>
<svg class="a" style="left:402px;top:111px" width="16" height="16" viewBox="0 0 16 16"><rect x="1" y="2" width="6" height="12" fill="#aca899"/><path d="M4 5h5V3l4 5-4 5v-2H4z" fill="#ece9d8" stroke="#aca899"/><rect x="12" y="1" width="3" height="14" fill="#aca899"/></svg>
<div class="a" style="left:425px;top:108px;width:1px;height:21px;background:#c5c2b2"></div>
<svg class="a" style="left:432px;top:111px" width="16" height="16" viewBox="0 0 16 16"><path d="M2 1h5v4l2 1v4l-2 1v4H2v-3h2V5H2z" fill="#aca899"/></svg>
<svg class="a" style="left:454px;top:111px" width="16" height="16" viewBox="0 0 16 16"><path d="M8 1v12M3 4h10M1 9l2-5 2 5zM11 9l2-5 2 5z" stroke="#aca899" fill="none"/><rect x="1" y="13" width="14" height="2" fill="#aca899"/></svg>
<svg class="a" style="left:476px;top:111px" width="16" height="16" viewBox="0 0 16 16"><rect x="0.5" y="3.5" width="15" height="9" fill="none" stroke="#aca899" stroke-width="1.5"/><rect x="1" y="8" width="14" height="4" fill="#aca899"/></svg>
<svg class="a" style="left:498px;top:111px" width="16" height="16" viewBox="0 0 16 16"><rect x="2" y="2" width="12" height="12" fill="#aca899"/></svg>
<svg class="a" style="left:520px;top:111px" width="16" height="16" viewBox="0 0 16 16"><path d="M1 13l5-6h9v6z" fill="#aca899"/><path d="M7 7c0-3 6-3 6 0" stroke="#aca899" fill="none" stroke-width="1.3"/></svg>
<svg class="a" style="left:542px;top:111px" width="16" height="16" viewBox="0 0 16 16"><path d="M2 3h12l2 2v6l-2 2H2l-2-2V5z" fill="#aca899"/></svg>
<div class="a" style="left:565px;top:108px;width:1px;height:21px;background:#c5c2b2"></div>
<svg class="a" style="left:572px;top:111px" width="16" height="16" viewBox="0 0 16 16"><rect x="0.5" y="2.5" width="15" height="11" fill="none" stroke="#aca899"/><text x="8" y="12" font-size="8.5" text-anchor="middle" fill="#aca899" font-family="Liberation Mono" letter-spacing="-0.8">CMY</text></svg>
<svg class="a" style="left:594px;top:111px" width="16" height="16" viewBox="0 0 16 16"><rect x="0.5" y="2.5" width="15" height="11" fill="none" stroke="#aca899"/><text x="8" y="12" font-size="8.5" text-anchor="middle" fill="#aca899" font-family="Liberation Mono" letter-spacing="-0.8">RGB</text></svg>
<svg class="a" style="left:630px;top:111px" width="16" height="16" viewBox="0 0 16 16"><circle cx="6" cy="6" r="5" fill="#2ee0f0" stroke="#000" stroke-width="1.2"/><path d="M9.5 9.5l5 5" stroke="#000" stroke-width="2.2"/></svg>
<svg class="a" style="left:652px;top:111px" width="16" height="16" viewBox="0 0 16 16"><circle cx="6" cy="6" r="5" fill="#2ee0f0" stroke="#000" stroke-width="1.2"/><path d="M3 6h6M6 3v6" stroke="#000" stroke-width="1.6"/><path d="M9.5 9.5l5 5" stroke="#000" stroke-width="2.2"/></svg>
<svg class="a" style="left:674px;top:111px" width="16" height="16" viewBox="0 0 16 16"><circle cx="6" cy="6" r="5" fill="#2ee0f0" stroke="#000" stroke-width="1.2"/><path d="M3 6h6" stroke="#000" stroke-width="1.6"/><path d="M9.5 9.5l5 5" stroke="#000" stroke-width="2.2"/></svg>
<svg class="a" style="left:696px;top:111px" width="16" height="16" viewBox="0 0 16 16"><rect x="1" y="1" width="14" height="14" fill="none" stroke="#aca899"/><rect x="3" y="3" width="10" height="10" fill="#aca899" opacity=".8"/><path d="M4 3v10M6 3v10M8 3v10M10 3v10M12 3v10M3 4h10M3 6h10M3 8h10M3 10h10M3 12h10" stroke="#ece9d8" stroke-width=".6"/></svg>
<div class="a" style="left:719px;top:108px;width:1px;height:21px;background:#c5c2b2"></div>
<svg class="a" style="left:726px;top:111px" width="16" height="16" viewBox="0 0 16 16"><path d="M6.5 1.5h4v13h-4z" fill="#e8dcc0" stroke="#000"/><path d="M10.5 3.5h2l1 2v5l-1 2h-2z" fill="#fff" stroke="#000"/><rect x="12" y="5" width="1" height="6" fill="#3cd"/><path d="M1 10l2-2h3M1 13l2-2h3" stroke="#000" fill="none"/></svg>
<svg class="a" style="left:748px;top:111px" width="16" height="16" viewBox="0 0 16 16"><path d="M1 10 L11 3 L13 6 L3 13Z" fill="#3a4ad8" stroke="#1a1a70" stroke-width=".8"/><path d="M8 8v7M5 15h6" stroke="#000"/><rect x="14" y="0" width="2" height="2" fill="#ff0"/></svg>
<svg class="a" style="left:770px;top:111px" width="16" height="16" viewBox="0 0 16 16"><rect x="0" y="1" width="16" height="14" fill="#333"/><path d="M1 13 V10 L2 9 L4 9 L5 6 L7 6 L8 9 L10 9 L11 8 L13 9 L15 11 L15 13Z" fill="#fff"/><rect x="2" y="13" width="2" height="2" fill="#e03030"/><rect x="12" y="13" width="2" height="2" fill="#30c040"/></svg>
<svg class="a" style="left:814px;top:111px" width="16" height="16" viewBox="0 0 16 16"><rect x="0" y="1" width="16" height="14" fill="#d8d4c4" stroke="#000"/><circle cx="7" cy="7" r="3.5" fill="#2ee0f0" stroke="#000"/><path d="M10 10l4 4" stroke="#000" stroke-width="1.6"/></svg>
<svg class="a" style="left:836px;top:111px" width="16" height="16" viewBox="0 0 16 16"><rect x="1.5" y="6.5" width="10" height="9" fill="#d8d4c4" stroke="#000"/><path d="M4 12h1M8 11h1M7 13h1" stroke="#fff"/><rect x="1.5" y="3.5" width="8" height="4" fill="#fff" stroke="#3030c0"/><rect x="2" y="4" width="3" height="1" fill="#3030c0"/><circle cx="12" cy="4" r="3" fill="#fff" stroke="#444"/><path d="M15 1v6" stroke="#3030c0" stroke-width="1.2"/><path d="M7 7l3-2" stroke="#888"/></svg>
<svg class="a" style="left:858px;top:111px" width="16" height="16" viewBox="0 0 16 16"><path d="M1 1v14h14" stroke="#000" fill="none"/><path d="M2 13C5 0 9 0 14 13" stroke="#3030d0" fill="none" stroke-width="1.2"/></svg>
<svg class="a" style="left:880px;top:111px" width="16" height="16" viewBox="0 0 16 16"><rect x="1" y="4" width="8" height="8" fill="#6cc" stroke="#115"/><rect x="7" y="1" width="8" height="10" fill="#fff" stroke="#115"/><path d="M9 4h4M9 6h4M9 8h4" stroke="#115"/><rect x="5" y="10" width="8" height="6" fill="#8dd" stroke="#115"/></svg>
<div class="a" style="left:903px;top:108px;width:1px;height:21px;background:#c5c2b2"></div>
<svg class="a" style="left:910px;top:111px" width="16" height="16" viewBox="0 0 16 16"><rect x="0.5" y="0.5" width="15" height="15" fill="#e02828" stroke="#8a1010"/><path d="M5 2c7 1 7 11 0 12 2-3 2-9 0-12z" fill="#ffe000" stroke="#000" stroke-width="0.8"/></svg>
<div class="a" style="left:933px;top:108px;width:1px;height:21px;background:#c5c2b2"></div>
<svg class="a" style="left:940px;top:111px" width="16" height="16" viewBox="0 0 16 16"><path d="M2 3h10v7H2z" fill="#aca899"/><path d="M12 4l3-2v8l-3-2z" fill="#aca899"/><path d="M7 10l-3 6M7 10v6M7 10l3 6" stroke="#aca899"/></svg>
<div class="a" style="left:963px;top:108px;width:1px;height:21px;background:#c5c2b2"></div>
<svg class="a" style="left:971px;top:111px" width="16" height="16" viewBox="0 0 16 16"><rect x="1" y="1" width="5" height="5" fill="#fff" stroke="#3030c0"/><rect x="9" y="1" width="5" height="5" fill="#fff" stroke="#3030c0"/><rect x="5" y="5" width="5" height="5" fill="#fff" stroke="#3030c0"/><rect x="1" y="10" width="15" height="6" fill="#111"/><path d="M2 15l3-3 3 1 3-2 4 3z" fill="#fff"/><rect x="2" y="15" width="3" height="1" fill="#e03030"/><rect x="11" y="15" width="3" height="1" fill="#30c040"/></svg>
<div class="a" style="left:137px;top:54px;width:21px;height:20px;background:#c1d2ee;border:1px solid #316ac5"></div>
<svg class="a" style="left:140px;top:56px" width="16" height="16" viewBox="0 0 16 16"><rect x="0" y="0" width="16" height="16" fill="#a9a493"/><circle cx="8" cy="8" r="5" stroke="#cbd6ea" fill="none" stroke-width="1"/><path d="M8 1v14M1 8h14" stroke="#cbd6ea" stroke-width="1"/></svg>
<div class="a" style="left:789px;top:108px;width:21px;height:20px;background:#c1d2ee;border:1px solid #316ac5"></div>
<svg class="a" style="left:792px;top:110px" width="16" height="16" viewBox="0 0 16 16"><rect x="0" y="0" width="16" height="16" fill="#a9a493"/><circle cx="8" cy="8" r="5" stroke="#cbd6ea" fill="none" stroke-width="1"/><path d="M8 1v14M1 8h14" stroke="#cbd6ea" stroke-width="1"/></svg>
<div class="a" style="left:278px;top:54px;width:64px;height:21px;background:#fff;border:1px solid;border-color:#aca899 #fff #fff #aca899;box-shadow:inset 1px 1px #716f64,inset -1px -1px #f1efe2"></div>
<div class="a nw" style="left:283px;top:58px;font-size:12px">100%</div>
<div class="a" style="left:322px;top:56px;width:17px;height:17px;background:#ece9d8;border:1px solid;border-color:#fff #716f64 #716f64 #fff"></div>
<svg class="a" style="left:326px;top:62px" width="9" height="5"><path d="M0 0h9L4.5 5z" fill="#000"/></svg>
<div class="a" style="left:0px;top:132px;width:1024px;height:1px;background:#aca899"></div>
<div class="a" style="left:0px;top:133px;width:1024px;height:16px;background:#f8f4e4"></div>
<svg class="a" style="left:997px;top:137px" width="24" height="9"><path d="M4 0v8L0 4z M16 0v8l4-4z" fill="#ddd9c6"/></svg>
<!-- MDI frame -->
<div class="a" style="left:0;top:149px;width:1024px;height:542px;background:#ece9d8;border-top:1px solid #fff;border-left:1px solid #fff;border-right:1px solid #716f64;border-bottom:1px solid #716f64"></div>
<div class="a" style="left:4px;top:155px;width:1016px;height:532px;border-top:2px solid #8d8a7a;border-left:2px solid #8d8a7a;border-right:2px solid #fff;border-bottom:2px solid #fff"></div>
<!-- image window -->
<div class="a" style="left:6px;top:157px;width:1012px;height:528px;background:linear-gradient(90deg,#6a7ad8,#7b8be0 40%,#7b8be0 60%,#5a68cf);border-radius:6px 6px 0 0"></div>
<div class="a" style="left:6px;top:157px;width:1012px;height:30px;border-radius:6px 6px 0 0;background:linear-gradient(#9fb6ec 0,#8aa5e6 2px,#7d9ae0 5px,#7a96df 14px,#7c9de3 20px,#80a5e7 25px,#7d9fe4 28px,#6f8bdc 30px)"></div>
<div class="a tbtn" style="left:945px;top:163px"><div class="a" style="left:4px;top:12px;width:8px;height:3px;background:#fff"></div></div>
<div class="a tbtn" style="left:968px;top:163px"><div class="a" style="left:3px;top:3px;width:13px;height:12px;border:1px solid #fff;border-top-width:3px"></div></div>
<div class="a tbtn x" style="left:991px;top:163px"><svg class="a" style="left:3px;top:3px" width="13" height="13"><path d="M2 2 L11 11 M11 2 L2 11" stroke="#fff" stroke-width="2"/></svg></div>
<div class="a" style="left:10px;top:187px;width:1004px;height:494px;border-top:2px solid #aca58f;border-left:2px solid #8d8a7a;border-right:1px solid #fff;border-bottom:1px solid #fff;background:#ece9d8"></div>
<!-- star field -->
<div class="a" id="sf" style="left:12px;top:189px;width:983px;height:473px;background:#000;overflow:hidden">
<svg class="a" style="left:0;top:0" width="983" height="473"><defs><filter id="fb" x="0" y="0" width="100%" height="100%"><feGaussianBlur stdDeviation="7"/></filter></defs><g filter="url(#fb)"><rect x="72" y="0" width="24" height="24" fill="#030303"/><rect x="240" y="0" width="24" height="24" fill="#040404"/><rect x="408" y="0" width="24" height="24" fill="#030303"/><rect x="480" y="0" width="24" height="24" fill="#050505"/><rect x="528" y="0" width="24" height="24" fill="#030303"/><rect x="600" y="0" width="24" height="24" fill="#070707"/><rect x="624" y="0" width="24" height="24" fill="#030303"/><rect x="648" y="0" width="24" height="24" fill="#030303"/><rect x="672" y="0" width="24" height="24" fill="#030303"/><rect x="720" y="0" width="24" height="24" fill="#050505"/><rect x="768" y="0" width="24" height="24" fill="#030303"/><rect x="816" y="0" width="24" height="24" fill="#040404"/><rect x="840" y="0" width="24" height="24" fill="#060606"/><rect x="864" y="0" width="24" height="24" fill="#090909"/><rect x="408" y="24" width="24" height="24" fill="#030303"/><rect x="480" y="24" width="24" height="24" fill="#030303"/><rect x="504" y="24" width="24" height="24" fill="#030303"/><rect x="528" y="24" width="24" height="24" fill="#050505"/><rect x="624" y="24" width="24" height="24" fill="#030303"/><rect x="672" y="24" width="24" height="24" fill="#030303"/><rect x="696" y="24" width="24" height="24" fill="#060606"/><rect x="840" y="24" width="24" height="24" fill="#060606"/><rect x="864" y="24" width="24" height="24" fill="#030303"/><rect x="888" y="24" width="24" height="24" fill="#060606"/><rect x="912" y="24" width="24" height="24" fill="#030303"/><rect x="360" y="48" width="24" height="24" fill="#030303"/><rect x="408" y="48" width="24" height="24" fill="#030303"/><rect x="456" y="48" width="24" height="24" fill="#040404"/><rect x="480" y="48" width="24" height="24" fill="#040404"/><rect x="504" y="48" width="24" height="24" fill="#030303"/><rect x="552" y="48" width="24" height="24" fill="#050505"/><rect x="576" y="48" width="24" height="24" fill="#030303"/><rect x="600" y="48" width="24" height="24" fill="#040404"/><rect x="624" y="48" width="24" height="24" fill="#060606"/><rect x="672" y="48" width="24" height="24" fill="#0c0c0c"/><rect x="696" y="48" width="24" height="24" fill="#0a0a0a"/><rect x="720" y="48" width="24" height="24" fill="#050505"/><rect x="744" y="48" width="24" height="24" fill="#030303"/><rect x="792" y="48" width="24" height="24" fill="#040404"/><rect x="816" y="48" width="24" height="24" fill="#040404"/><rect x="840" y="48" width="24" height="24" fill="#0a0a0a"/><rect x="888" y="48" width="24" height="24" fill="#0a0a0a"/><rect x="408" y="72" width="24" height="24" fill="#030303"/><rect x="456" y="72" width="24" height="24" fill="#040404"/><rect x="480" y="72" width="24" height="24" fill="#030303"/><rect x="504" y="72" width="24" height="24" fill="#040404"/><rect x="528" y="72" width="24" height="24" fill="#040404"/><rect x="552" y="72" width="24" height="24" fill="#040404"/><rect x="576" y="72" width="24" height="24" fill="#030303"/><rect x="600" y="72" width="24" height="24" fill="#050505"/><rect x="624" y="72" width="24" height="24" fill="#030303"/><rect x="648" y="72" width="24" height="24" fill="#030303"/><rect x="672" y="72" width="24" height="24" fill="#0e0e0e"/><rect x="696" y="72" width="24" height="24" fill="#060606"/><rect x="720" y="72" width="24" height="24" fill="#040404"/><rect x="744" y="72" width="24" height="24" fill="#050505"/><rect x="816" y="72" width="24" height="24" fill="#030303"/><rect x="840" y="72" width="24" height="24" fill="#0a0a0a"/><rect x="864" y="72" width="24" height="24" fill="#090909"/><rect x="888" y="72" width="24" height="24" fill="#030303"/><rect x="0" y="96" width="24" height="24" fill="#030303"/><rect x="384" y="96" width="24" height="24" fill="#030303"/><rect x="432" y="96" width="24" height="24" fill="#040404"/><rect x="456" y="96" width="24" height="24" fill="#050505"/><rect x="480" y="96" width="24" height="24" fill="#040404"/><rect x="504" y="96" width="24" height="24" fill="#070707"/><rect x="528" y="96" width="24" height="24" fill="#050505"/><rect x="552" y="96" width="24" height="24" fill="#040404"/><rect x="576" y="96" width="24" height="24" fill="#050505"/><rect x="600" y="96" width="24" height="24" fill="#040404"/><rect x="624" y="96" width="24" height="24" fill="#050505"/><rect x="648" y="96" width="24" height="24" fill="#0d0d0d"/><rect x="672" y="96" width="24" height="24" fill="#090909"/><rect x="696" y="96" width="24" height="24" fill="#040404"/><rect x="720" y="96" width="24" height="24" fill="#040404"/><rect x="744" y="96" width="24" height="24" fill="#030303"/><rect x="792" y="96" width="24" height="24" fill="#030303"/><rect x="816" y="96" width="24" height="24" fill="#030303"/><rect x="840" y="96" width="24" height="24" fill="#040404"/><rect x="864" y="96" width="24" height="24" fill="#050505"/><rect x="888" y="96" width="24" height="24" fill="#030303"/><rect x="912" y="96" width="24" height="24" fill="#030303"/><rect x="960" y="96" width="24" height="24" fill="#030303"/><rect x="144" y="120" width="24" height="24" fill="#030303"/><rect x="168" y="120" width="24" height="24" fill="#030303"/><rect x="216" y="120" width="24" height="24" fill="#030303"/><rect x="240" y="120" width="24" height="24" fill="#030303"/><rect x="312" y="120" width="24" height="24" fill="#030303"/><rect x="360" y="120" width="24" height="24" fill="#030303"/><rect x="384" y="120" width="24" height="24" fill="#030303"/><rect x="408" y="120" width="24" height="24" fill="#060606"/><rect x="432" y="120" width="24" height="24" fill="#070707"/><rect x="456" y="120" width="24" height="24" fill="#060606"/><rect x="480" y="120" width="24" height="24" fill="#040404"/><rect x="504" y="120" width="24" height="24" fill="#080808"/><rect x="528" y="120" width="24" height="24" fill="#060606"/><rect x="552" y="120" width="24" height="24" fill="#070707"/><rect x="576" y="120" width="24" height="24" fill="#040404"/><rect x="600" y="120" width="24" height="24" fill="#040404"/><rect x="624" y="120" width="24" height="24" fill="#060606"/><rect x="648" y="120" width="24" height="24" fill="#0c0c0c"/><rect x="672" y="120" width="24" height="24" fill="#0d0d0d"/><rect x="696" y="120" width="24" height="24" fill="#040404"/><rect x="720" y="120" width="24" height="24" fill="#050505"/><rect x="744" y="120" width="24" height="24" fill="#060606"/><rect x="768" y="120" width="24" height="24" fill="#030303"/><rect x="792" y="120" width="24" height="24" fill="#040404"/><rect x="816" y="120" width="24" height="24" fill="#040404"/><rect x="840" y="120" width="24" height="24" fill="#030303"/><rect x="864" y="120" width="24" height="24" fill="#050505"/><rect x="888" y="120" width="24" height="24" fill="#040404"/><rect x="912" y="120" width="24" height="24" fill="#040404"/><rect x="960" y="120" width="24" height="24" fill="#030303"/><rect x="120" y="144" width="24" height="24" fill="#030303"/><rect x="240" y="144" width="24" height="24" fill="#030303"/><rect x="336" y="144" width="24" height="24" fill="#040404"/><rect x="360" y="144" width="24" height="24" fill="#040404"/><rect x="384" y="144" width="24" height="24" fill="#040404"/><rect x="408" y="144" width="24" height="24" fill="#040404"/><rect x="432" y="144" width="24" height="24" fill="#060606"/><rect x="456" y="144" width="24" height="24" fill="#080808"/><rect x="480" y="144" width="24" height="24" fill="#080808"/><rect x="504" y="144" width="24" height="24" fill="#050505"/><rect x="528" y="144" width="24" height="24" fill="#070707"/><rect x="552" y="144" width="24" height="24" fill="#090909"/><rect x="576" y="144" width="24" height="24" fill="#090909"/><rect x="600" y="144" width="24" height="24" fill="#080808"/><rect x="624" y="144" width="24" height="24" fill="#050505"/><rect x="648" y="144" width="24" height="24" fill="#090909"/><rect x="672" y="144" width="24" height="24" fill="#080808"/><rect x="696" y="144" width="24" height="24" fill="#060606"/><rect x="720" y="144" width="24" height="24" fill="#080808"/><rect x="744" y="144" width="24" height="24" fill="#040404"/><rect x="768" y="144" width="24" height="24" fill="#050505"/><rect x="792" y="144" width="24" height="24" fill="#040404"/><rect x="816" y="144" width="24" height="24" fill="#030303"/><rect x="840" y="144" width="24" height="24" fill="#090909"/><rect x="864" y="144" width="24" height="24" fill="#030303"/><rect x="888" y="144" width="24" height="24" fill="#030303"/><rect x="72" y="168" width="24" height="24" fill="#030303"/><rect x="96" y="168" width="24" height="24" fill="#030303"/><rect x="216" y="168" width="24" height="24" fill="#030303"/><rect x="240" y="168" width="24" height="24" fill="#030303"/><rect x="312" y="168" width="24" height="24" fill="#030303"/><rect x="336" y="168" width="24" height="24" fill="#030303"/><rect x="384" y="168" width="24" height="24" fill="#040404"/><rect x="408" y="168" width="24" height="24" fill="#040404"/><rect x="432" y="168" width="24" height="24" fill="#080808"/><rect x="456" y="168" width="24" height="24" fill="#060606"/><rect x="480" y="168" width="24" height="24" fill="#080808"/><rect x="504" y="168" width="24" height="24" fill="#080808"/><rect x="528" y="168" width="24" height="24" fill="#070707"/><rect x="552" y="168" width="24" height="24" fill="#090909"/><rect x="576" y="168" width="24" height="24" fill="#060606"/><rect x="600" y="168" width="24" height="24" fill="#060606"/><rect x="624" y="168" width="24" height="24" fill="#060606"/><rect x="648" y="168" width="24" height="24" fill="#080808"/><rect x="672" y="168" width="24" height="24" fill="#080808"/><rect x="696" y="168" width="24" height="24" fill="#060606"/><rect x="720" y="168" width="24" height="24" fill="#0f0f0f"/><rect x="744" y="168" width="24" height="24" fill="#060606"/><rect x="768" y="168" width="24" height="24" fill="#040404"/><rect x="792" y="168" width="24" height="24" fill="#060606"/><rect x="816" y="168" width="24" height="24" fill="#080808"/><rect x="840" y="168" width="24" height="24" fill="#050505"/><rect x="144" y="192" width="24" height="24" fill="#030303"/><rect x="168" y="192" width="24" height="24" fill="#030303"/><rect x="240" y="192" width="24" height="24" fill="#030303"/><rect x="264" y="192" width="24" height="24" fill="#030303"/><rect x="336" y="192" width="24" height="24" fill="#030303"/><rect x="360" y="192" width="24" height="24" fill="#0b0b0b"/><rect x="384" y="192" width="24" height="24" fill="#070707"/><rect x="408" y="192" width="24" height="24" fill="#080808"/><rect x="432" y="192" width="24" height="24" fill="#090909"/><rect x="456" y="192" width="24" height="24" fill="#080808"/><rect x="480" y="192" width="24" height="24" fill="#090909"/><rect x="504" y="192" width="24" height="24" fill="#0a0a0a"/><rect x="528" y="192" width="24" height="24" fill="#0b0b0b"/><rect x="552" y="192" width="24" height="24" fill="#0b0b0b"/><rect x="576" y="192" width="24" height="24" fill="#0b0b0b"/><rect x="600" y="192" width="24" height="24" fill="#090909"/><rect x="624" y="192" width="24" height="24" fill="#080808"/><rect x="648" y="192" width="24" height="24" fill="#090909"/><rect x="672" y="192" width="24" height="24" fill="#0a0a0a"/><rect x="696" y="192" width="24" height="24" fill="#080808"/><rect x="720" y="192" width="24" height="24" fill="#131313"/><rect x="744" y="192" width="24" height="24" fill="#060606"/><rect x="768" y="192" width="24" height="24" fill="#050505"/><rect x="792" y="192" width="24" height="24" fill="#030303"/><rect x="816" y="192" width="24" height="24" fill="#090909"/><rect x="864" y="192" width="24" height="24" fill="#070707"/><rect x="888" y="192" width="24" height="24" fill="#060606"/><rect x="936" y="192" width="24" height="24" fill="#030303"/><rect x="0" y="216" width="24" height="24" fill="#030303"/><rect x="24" y="216" width="24" height="24" fill="#030303"/><rect x="144" y="216" width="24" height="24" fill="#030303"/><rect x="168" y="216" width="24" height="24" fill="#030303"/><rect x="312" y="216" width="24" height="24" fill="#040404"/><rect x="336" y="216" width="24" height="24" fill="#0a0a0a"/><rect x="360" y="216" width="24" height="24" fill="#050505"/><rect x="384" y="216" width="24" height="24" fill="#040404"/><rect x="408" y="216" width="24" height="24" fill="#090909"/><rect x="432" y="216" width="24" height="24" fill="#080808"/><rect x="456" y="216" width="24" height="24" fill="#070707"/><rect x="480" y="216" width="24" height="24" fill="#0b0b0b"/><rect x="504" y="216" width="24" height="24" fill="#0f0f0f"/><rect x="528" y="216" width="24" height="24" fill="#0b0b0b"/><rect x="552" y="216" width="24" height="24" fill="#111111"/><rect x="576" y="216" width="24" height="24" fill="#0a0a0a"/><rect x="600" y="216" width="24" height="24" fill="#0b0b0b"/><rect x="624" y="216" width="24" height="24" fill="#0c0c0c"/><rect x="648" y="216" width="24" height="24" fill="#0d0d0d"/><rect x="672" y="216" width="24" height="24" fill="#0c0c0c"/><rect x="696" y="216" width="24" height="24" fill="#0e0e0e"/><rect x="720" y="216" width="24" height="24" fill="#0c0c0c"/><rect x="744" y="216" width="24" height="24" fill="#080808"/><rect x="768" y="216" width="24" height="24" fill="#080808"/><rect x="792" y="216" width="24" height="24" fill="#060606"/><rect x="816" y="216" width="24" height="24" fill="#070707"/><rect x="840" y="216" width="24" height="24" fill="#0a0a0a"/><rect x="864" y="216" width="24" height="24" fill="#050505"/><rect x="888" y="216" width="24" height="24" fill="#030303"/><rect x="936" y="216" width="24" height="24" fill="#030303"/><rect x="960" y="216" width="24" height="24" fill="#030303"/><rect x="0" y="240" width="24" height="24" fill="#030303"/><rect x="144" y="240" width="24" height="24" fill="#040404"/><rect x="168" y="240" width="24" height="24" fill="#030303"/><rect x="264" y="240" width="24" height="24" fill="#040404"/><rect x="288" y="240" width="24" height="24" fill="#030303"/><rect x="312" y="240" width="24" height="24" fill="#030303"/><rect x="336" y="240" width="24" height="24" fill="#0d0d0d"/><rect x="360" y="240" width="24" height="24" fill="#040404"/><rect x="384" y="240" width="24" height="24" fill="#050505"/><rect x="408" y="240" width="24" height="24" fill="#070707"/><rect x="432" y="240" width="24" height="24" fill="#0d0d0d"/><rect x="456" y="240" width="24" height="24" fill="#0d0d0d"/><rect x="480" y="240" width="24" height="24" fill="#0e0e0e"/><rect x="504" y="240" width="24" height="24" fill="#0c0c0c"/><rect x="528" y="240" width="24" height="24" fill="#121212"/><rect x="552" y="240" width="24" height="24" fill="#121212"/><rect x="576" y="240" width="24" height="24" fill="#0f0f0f"/><rect x="600" y="240" width="24" height="24" fill="#0d0d0d"/><rect x="624" y="240" width="24" height="24" fill="#0f0f0f"/><rect x="648" y="240" width="24" height="24" fill="#0f0f0f"/><rect x="672" y="240" width="24" height="24" fill="#0a0a0a"/><rect x="696" y="240" width="24" height="24" fill="#0d0d0d"/><rect x="720" y="240" width="24" height="24" fill="#0d0d0d"/><rect x="744" y="240" width="24" height="24" fill="#080808"/><rect x="768" y="240" width="24" height="24" fill="#040404"/><rect x="792" y="240" width="24" height="24" fill="#040404"/><rect x="816" y="240" width="24" height="24" fill="#050505"/><rect x="840" y="240" width="24" height="24" fill="#070707"/><rect x="864" y="240" width="24" height="24" fill="#030303"/><rect x="912" y="240" width="24" height="24" fill="#0a0a0a"/><rect x="936" y="240" width="24" height="24" fill="#0b0b0b"/><rect x="960" y="240" width="24" height="24" fill="#040404"/><rect x="0" y="264" width="24" height="24" fill="#030303"/><rect x="96" y="264" width="24" height="24" fill="#040404"/><rect x="120" y="264" width="24" height="24" fill="#030303"/><rect x="288" y="264" width="24" height="24" fill="#030303"/><rect x="312" y="264" width="24" height="24" fill="#030303"/><rect x="336" y="264" width="24" height="24" fill="#050505"/><rect x="360" y="264" width="24" height="24" fill="#080808"/><rect x="384" y="264" width="24" height="24" fill="#080808"/><rect x="408" y="264" width="24" height="24" fill="#0a0a0a"/><rect x="432" y="264" width="24" height="24" fill="#131313"/><rect x="456" y="264" width="24" height="24" fill="#0e0e0e"/><rect x="480" y="264" width="24" height="24" fill="#101010"/><rect x="504" y="264" width="24" height="24" fill="#151515"/><rect x="528" y="264" width="24" height="24" fill="#161616"/><rect x="552" y="264" width="24" height="24" fill="#101010"/><rect x="576" y="264" width="24" height="24" fill="#121212"/><rect x="600" y="264" width="24" height="24" fill="#111111"/><rect x="624" y="264" width="24" height="24" fill="#0e0e0e"/><rect x="648" y="264" width="24" height="24" fill="#0d0d0d"/><rect x="672" y="264" width="24" height="24" fill="#111111"/><rect x="696" y="264" width="24" height="24" fill="#0f0f0f"/><rect x="720" y="264" width="24" height="24" fill="#0d0d0d"/><rect x="744" y="264" width="24" height="24" fill="#0b0b0b"/><rect x="768" y="264" width="24" height="24" fill="#050505"/><rect x="792" y="264" width="24" height="24" fill="#060606"/><rect x="840" y="264" width="24" height="24" fill="#060606"/><rect x="888" y="264" width="24" height="24" fill="#040404"/><rect x="960" y="264" width="24" height="24" fill="#030303"/><rect x="72" y="288" width="24" height="24" fill="#030303"/><rect x="120" y="288" width="24" height="24" fill="#030303"/><rect x="168" y="288" width="24" height="24" fill="#030303"/><rect x="192" y="288" width="24" height="24" fill="#030303"/><rect x="240" y="288" width="24" height="24" fill="#030303"/><rect x="264" y="288" width="24" height="24" fill="#050505"/><rect x="288" y="288" width="24" height="24" fill="#040404"/><rect x="312" y="288" width="24" height="24" fill="#050505"/><rect x="336" y="288" width="24" height="24" fill="#070707"/><rect x="360" y="288" width="24" height="24" fill="#0f0f0f"/><rect x="384" y="288" width="24" height="24" fill="#0f0f0f"/><rect x="408" y="288" width="24" height="24" fill="#0f0f0f"/><rect x="432" y="288" width="24" height="24" fill="#1c1c1c"/><rect x="456" y="288" width="24" height="24" fill="#131313"/><rect x="480" y="288" width="24" height="24" fill="#121212"/><rect x="504" y="288" width="24" height="24" fill="#1c1c1c"/><rect x="528" y="288" width="24" height="24" fill="#181818"/><rect x="552" y="288" width="24" height="24" fill="#151515"/><rect x="576" y="288" width="24" height="24" fill="#131313"/><rect x="600" y="288" width="24" height="24" fill="#161616"/><rect x="624" y="288" width="24" height="24" fill="#171717"/><rect x="648" y="288" width="24" height="24" fill="#171717"/><rect x="672" y="288" width="24" height="24" fill="#141414"/><rect x="696" y="288" width="24" height="24" fill="#101010"/><rect x="720" y="288" width="24" height="24" fill="#111111"/><rect x="744" y="288" width="24" height="24" fill="#101010"/><rect x="768" y="288" width="24" height="24" fill="#080808"/><rect x="792" y="288" width="24" height="24" fill="#030303"/><rect x="816" y="288" width="24" height="24" fill="#070707"/><rect x="840" y="288" width="24" height="24" fill="#050505"/><rect x="864" y="288" width="24" height="24" fill="#050505"/><rect x="888" y="288" width="24" height="24" fill="#070707"/><rect x="936" y="288" width="24" height="24" fill="#030303"/><rect x="0" y="312" width="24" height="24" fill="#040404"/><rect x="72" y="312" width="24" height="24" fill="#030303"/><rect x="168" y="312" width="24" height="24" fill="#030303"/><rect x="192" y="312" width="24" height="24" fill="#040404"/><rect x="216" y="312" width="24" height="24" fill="#030303"/><rect x="264" y="312" width="24" height="24" fill="#050505"/><rect x="288" y="312" width="24" height="24" fill="#060606"/><rect x="312" y="312" width="24" height="24" fill="#060606"/><rect x="336" y="312" width="24" height="24" fill="#0c0c0c"/><rect x="360" y="312" width="24" height="24" fill="#111111"/><rect x="384" y="312" width="24" height="24" fill="#111111"/><rect x="408" y="312" width="24" height="24" fill="#151515"/><rect x="432" y="312" width="24" height="24" fill="#202020"/><rect x="456" y="312" width="24" height="24" fill="#1b1b1b"/><rect x="480" y="312" width="24" height="24" fill="#202020"/><rect x="504" y="312" width="24" height="24" fill="#252525"/><rect x="528" y="312" width="24" height="24" fill="#212121"/><rect x="552" y="312" width="24" height="24" fill="#202020"/><rect x="576" y="312" width="24" height="24" fill="#202020"/><rect x="600" y="312" width="24" height="24" fill="#1f1f1f"/><rect x="624" y="312" width="24" height="24" fill="#222222"/><rect x="648" y="312" width="24" height="24" fill="#212121"/><rect x="672" y="312" width="24" height="24" fill="#222222"/><rect x="696" y="312" width="24" height="24" fill="#1f1f1f"/><rect x="720" y="312" width="24" height="24" fill="#131313"/><rect x="744" y="312" width="24" height="24" fill="#141414"/><rect x="768" y="312" width="24" height="24" fill="#080808"/><rect x="792" y="312" width="24" height="24" fill="#050505"/><rect x="816" y="312" width="24" height="24" fill="#030303"/><rect x="840" y="312" width="24" height="24" fill="#040404"/><rect x="864" y="312" width="24" height="24" fill="#050505"/><rect x="888" y="312" width="24" height="24" fill="#050505"/><rect x="912" y="312" width="24" height="24" fill="#060606"/><rect x="960" y="312" width="24" height="24" fill="#030303"/><rect x="0" y="336" width="24" height="24" fill="#0c0c0c"/><rect x="48" y="336" width="24" height="24" fill="#040404"/><rect x="120" y="336" width="24" height="24" fill="#030303"/><rect x="192" y="336" width="24" height="24" fill="#0d0d0d"/><rect x="264" y="336" width="24" height="24" fill="#030303"/><rect x="288" y="336" width="24" height="24" fill="#070707"/><rect x="312" y="336" width="24" height="24" fill="#080808"/><rect x="336" y="336" width="24" height="24" fill="#151515"/><rect x="360" y="336" width="24" height="24" fill="#121212"/><rect x="384" y="336" width="24" height="24" fill="#181818"/><rect x="408" y="336" width="24" height="24" fill="#242424"/><rect x="432" y="336" width="24" height="24" fill="#272727"/><rect x="456" y="336" width="24" height="24" fill="#2a2a2a"/><rect x="480" y="336" width="24" height="24" fill="#323232"/><rect x="504" y="336" width="24" height="24" fill="#2c2c2c"/><rect x="528" y="336" width="24" height="24" fill="#303030"/><rect x="552" y="336" width="24" height="24" fill="#373737"/><rect x="576" y="336" width="24" height="24" fill="#2f2f2f"/><rect x="600" y="336" width="24" height="24" fill="#343434"/><rect x="624" y="336" width="24" height="24" fill="#2f2f2f"/><rect x="648" y="336" width="24" height="24" fill="#2f2f2f"/><rect x="672" y="336" width="24" height="24" fill="#292929"/><rect x="696" y="336" width="24" height="24" fill="#272727"/><rect x="720" y="336" width="24" height="24" fill="#1f1f1f"/><rect x="744" y="336" width="24" height="24" fill="#1e1e1e"/><rect x="768" y="336" width="24" height="24" fill="#0f0f0f"/><rect x="792" y="336" width="24" height="24" fill="#080808"/><rect x="816" y="336" width="24" height="24" fill="#050505"/><rect x="840" y="336" width="24" height="24" fill="#060606"/><rect x="864" y="336" width="24" height="24" fill="#030303"/><rect x="912" y="336" width="24" height="24" fill="#060606"/><rect x="936" y="336" width="24" height="24" fill="#030303"/><rect x="960" y="336" width="24" height="24" fill="#030303"/><rect x="48" y="360" width="24" height="24" fill="#030303"/><rect x="72" y="360" width="24" height="24" fill="#030303"/><rect x="96" y="360" width="24" height="24" fill="#040404"/><rect x="168" y="360" width="24" height="24" fill="#0d0d0d"/><rect x="192" y="360" width="24" height="24" fill="#050505"/><rect x="240" y="360" width="24" height="24" fill="#050505"/><rect x="264" y="360" width="24" height="24" fill="#040404"/><rect x="288" y="360" width="24" height="24" fill="#0a0a0a"/><rect x="312" y="360" width="24" height="24" fill="#121212"/><rect x="336" y="360" width="24" height="24" fill="#242424"/><rect x="360" y="360" width="24" height="24" fill="#1d1d1d"/><rect x="384" y="360" width="24" height="24" fill="#313131"/><rect x="408" y="360" width="24" height="24" fill="#333333"/><rect x="432" y="360" width="24" height="24" fill="#3b3b3b"/><rect x="456" y="360" width="24" height="24" fill="#454545"/><rect x="480" y="360" width="24" height="24" fill="#424242"/><rect x="504" y="360" width="24" height="24" fill="#494949"/><rect x="528" y="360" width="24" height="24" fill="#4e4e4e"/><rect x="552" y="360" width="24" height="24" fill="#515151"/><rect x="576" y="360" width="24" height="24" fill="#4c4c4c"/><rect x="600" y="360" width="24" height="24" fill="#4c4c4c"/><rect x="624" y="360" width="24" height="24" fill="#484848"/><rect x="648" y="360" width="24" height="24" fill="#434343"/><rect x="672" y="360" width="24" height="24" fill="#393939"/><rect x="696" y="360" width="24" height="24" fill="#343434"/><rect x="720" y="360" width="24" height="24" fill="#2b2b2b"/><rect x="744" y="360" width="24" height="24" fill="#242424"/><rect x="768" y="360" width="24" height="24" fill="#111111"/><rect x="792" y="360" width="24" height="24" fill="#040404"/><rect x="816" y="360" width="24" height="24" fill="#060606"/><rect x="840" y="360" width="24" height="24" fill="#050505"/><rect x="864" y="360" width="24" height="24" fill="#050505"/><rect x="888" y="360" width="24" height="24" fill="#050505"/><rect x="936" y="360" width="24" height="24" fill="#050505"/><rect x="960" y="360" width="24" height="24" fill="#030303"/><rect x="24" y="384" width="24" height="24" fill="#030303"/><rect x="72" y="384" width="24" height="24" fill="#030303"/><rect x="96" y="384" width="24" height="24" fill="#040404"/><rect x="168" y="384" width="24" height="24" fill="#101010"/><rect x="192" y="384" width="24" height="24" fill="#030303"/><rect x="216" y="384" width="24" height="24" fill="#030303"/><rect x="240" y="384" width="24" height="24" fill="#060606"/><rect x="264" y="384" width="24" height="24" fill="#070707"/><rect x="288" y="384" width="24" height="24" fill="#0f0f0f"/><rect x="312" y="384" width="24" height="24" fill="#222222"/><rect x="336" y="384" width="24" height="24" fill="#363636"/><rect x="360" y="384" width="24" height="24" fill="#383838"/><rect x="384" y="384" width="24" height="24" fill="#434343"/><rect x="408" y="384" width="24" height="24" fill="#535353"/><rect x="432" y="384" width="24" height="24" fill="#5d5d5d"/><rect x="456" y="384" width="24" height="24" fill="#626262"/><rect x="480" y="384" width="24" height="24" fill="#696969"/><rect x="504" y="384" width="24" height="24" fill="#707070"/><rect x="528" y="384" width="24" height="24" fill="#6d6d6d"/><rect x="552" y="384" width="24" height="24" fill="#717171"/><rect x="576" y="384" width="24" height="24" fill="#696969"/><rect x="600" y="384" width="24" height="24" fill="#696969"/><rect x="624" y="384" width="24" height="24" fill="#5b5b5b"/><rect x="648" y="384" width="24" height="24" fill="#595959"/><rect x="672" y="384" width="24" height="24" fill="#575757"/><rect x="696" y="384" width="24" height="24" fill="#494949"/><rect x="720" y="384" width="24" height="24" fill="#474747"/><rect x="744" y="384" width="24" height="24" fill="#323232"/><rect x="768" y="384" width="24" height="24" fill="#171717"/><rect x="792" y="384" width="24" height="24" fill="#090909"/><rect x="816" y="384" width="24" height="24" fill="#040404"/><rect x="840" y="384" width="24" height="24" fill="#050505"/><rect x="864" y="384" width="24" height="24" fill="#030303"/><rect x="888" y="384" width="24" height="24" fill="#040404"/><rect x="912" y="384" width="24" height="24" fill="#050505"/><rect x="936" y="384" width="24" height="24" fill="#040404"/><rect x="960" y="384" width="24" height="24" fill="#030303"/><rect x="48" y="408" width="24" height="24" fill="#030303"/><rect x="72" y="408" width="24" height="24" fill="#030303"/><rect x="144" y="408" width="24" height="24" fill="#030303"/><rect x="168" y="408" width="24" height="24" fill="#0c0c0c"/><rect x="192" y="408" width="24" height="24" fill="#030303"/><rect x="216" y="408" width="24" height="24" fill="#040404"/><rect x="240" y="408" width="24" height="24" fill="#0a0a0a"/><rect x="264" y="408" width="24" height="24" fill="#0c0c0c"/><rect x="288" y="408" width="24" height="24" fill="#171717"/><rect x="312" y="408" width="24" height="24" fill="#333333"/><rect x="336" y="408" width="24" height="24" fill="#404040"/><rect x="360" y="408" width="24" height="24" fill="#555555"/><rect x="384" y="408" width="24" height="24" fill="#6a6a6a"/><rect x="408" y="408" width="24" height="24" fill="#7a7a7a"/><rect x="432" y="408" width="24" height="24" fill="#848484"/><rect x="456" y="408" width="24" height="24" fill="#8d8d8d"/><rect x="480" y="408" width="24" height="24" fill="#8b8b8b"/><rect x="504" y="408" width="24" height="24" fill="#939393"/><rect x="528" y="408" width="24" height="24" fill="#8f8f8f"/><rect x="552" y="408" width="24" height="24" fill="#898989"/><rect x="576" y="408" width="24" height="24" fill="#8a8a8a"/><rect x="600" y="408" width="24" height="24" fill="#7d7d7d"/><rect x="624" y="408" width="24" height="24" fill="#787878"/><rect x="648" y="408" width="24" height="24" fill="#6e6e6e"/><rect x="672" y="408" width="24" height="24" fill="#606060"/><rect x="696" y="408" width="24" height="24" fill="#575757"/><rect x="720" y="408" width="24" height="24" fill="#4a4a4a"/><rect x="744" y="408" width="24" height="24" fill="#3e3e3e"/><rect x="768" y="408" width="24" height="24" fill="#181818"/><rect x="792" y="408" width="24" height="24" fill="#080808"/><rect x="816" y="408" width="24" height="24" fill="#070707"/><rect x="840" y="408" width="24" height="24" fill="#080808"/><rect x="864" y="408" width="24" height="24" fill="#030303"/><rect x="888" y="408" width="24" height="24" fill="#050505"/><rect x="912" y="408" width="24" height="24" fill="#030303"/><rect x="936" y="408" width="24" height="24" fill="#060606"/><rect x="0" y="432" width="24" height="24" fill="#030303"/><rect x="24" y="432" width="24" height="24" fill="#030303"/><rect x="72" y="432" width="24" height="24" fill="#030303"/><rect x="144" y="432" width="24" height="24" fill="#030303"/><rect x="168" y="432" width="24" height="24" fill="#050505"/><rect x="216" y="432" width="24" height="24" fill="#080808"/><rect x="240" y="432" width="24" height="24" fill="#0e0e0e"/><rect x="264" y="432" width="24" height="24" fill="#131313"/><rect x="288" y="432" width="24" height="24" fill="#2a2a2a"/><rect x="312" y="432" width="24" height="24" fill="#494949"/><rect x="336" y="432" width="24" height="24" fill="#636363"/><rect x="360" y="432" width="24" height="24" fill="#777777"/><rect x="384" y="432" width="24" height="24" fill="#898989"/><rect x="408" y="432" width="24" height="24" fill="#9d9d9d"/><rect x="432" y="432" width="24" height="24" fill="#9f9f9f"/><rect x="456" y="432" width="24" height="24" fill="#a5a5a5"/><rect x="480" y="432" width="24" height="24" fill="#a4a4a4"/><rect x="504" y="432" width="24" height="24" fill="#a8a8a8"/><rect x="528" y="432" width="24" height="24" fill="#a9a9a9"/><rect x="552" y="432" width="24" height="24" fill="#9f9f9f"/><rect x="576" y="432" width="24" height="24" fill="#959595"/><rect x="600" y="432" width="24" height="24" fill="#949494"/><rect x="624" y="432" width="24" height="24" fill="#8e8e8e"/><rect x="648" y="432" width="24" height="24" fill="#797979"/><rect x="672" y="432" width="24" height="24" fill="#6b6b6b"/><rect x="696" y="432" width="24" height="24" fill="#5e5e5e"/><rect x="720" y="432" width="24" height="24" fill="#4e4e4e"/><rect x="744" y="432" width="24" height="24" fill="#454545"/><rect x="768" y="432" width="24" height="24" fill="#151515"/><rect x="792" y="432" width="24" height="24" fill="#070707"/><rect x="816" y="432" width="24" height="24" fill="#080808"/><rect x="840" y="432" width="24" height="24" fill="#060606"/><rect x="864" y="432" width="24" height="24" fill="#070707"/><rect x="888" y="432" width="24" height="24" fill="#060606"/><rect x="912" y="432" width="24" height="24" fill="#060606"/><rect x="936" y="432" width="24" height="24" fill="#040404"/><rect x="960" y="432" width="24" height="24" fill="#030303"/><rect x="24" y="456" width="24" height="24" fill="#030303"/><rect x="72" y="456" width="24" height="24" fill="#030303"/><rect x="96" y="456" width="24" height="24" fill="#060606"/><rect x="120" y="456" width="24" height="24" fill="#040404"/><rect x="168" y="456" width="24" height="24" fill="#030303"/><rect x="192" y="456" width="24" height="24" fill="#060606"/><rect x="216" y="456" width="24" height="24" fill="#0b0b0b"/><rect x="240" y="456" width="24" height="24" fill="#131313"/><rect x="264" y="456" width="24" height="24" fill="#191919"/><rect x="288" y="456" width="24" height="24" fill="#343434"/><rect x="312" y="456" width="24" height="24" fill="#5a5a5a"/><rect x="336" y="456" width="24" height="24" fill="#757575"/><rect x="360" y="456" width="24" height="24" fill="#929292"/><rect x="384" y="456" width="24" height="24" fill="#a4a4a4"/><rect x="408" y="456" width="24" height="24" fill="#adadad"/><rect x="432" y="456" width="24" height="24" fill="#adadad"/><rect x="456" y="456" width="24" height="24" fill="#a9a9a9"/><rect x="480" y="456" width="24" height="24" fill="#adadad"/><rect x="504" y="456" width="24" height="24" fill="#b3b3b3"/><rect x="528" y="456" width="24" height="24" fill="#adadad"/><rect x="552" y="456" width="24" height="24" fill="#adadad"/><rect x="576" y="456" width="24" height="24" fill="#9e9e9e"/><rect x="600" y="456" width="24" height="24" fill="#969696"/><rect x="624" y="456" width="24" height="24" fill="#949494"/><rect x="648" y="456" width="24" height="24" fill="#848484"/><rect x="672" y="456" width="24" height="24" fill="#717171"/><rect x="696" y="456" width="24" height="24" fill="#595959"/><rect x="720" y="456" width="24" height="24" fill="#515151"/><rect x="744" y="456" width="24" height="24" fill="#4d4d4d"/><rect x="768" y="456" width="24" height="24" fill="#1a1a1a"/><rect x="792" y="456" width="24" height="24" fill="#0a0a0a"/><rect x="816" y="456" width="24" height="24" fill="#0a0a0a"/><rect x="840" y="456" width="24" height="24" fill="#080808"/><rect x="864" y="456" width="24" height="24" fill="#060606"/><rect x="888" y="456" width="24" height="24" fill="#060606"/><rect x="912" y="456" width="24" height="24" fill="#040404"/><rect x="936" y="456" width="24" height="24" fill="#050505"/></g></svg>
<canvas id="cv" class="a" width="983" height="473" style="left:0;top:0"></canvas>
</div>
<!-- v scrollbar -->
<div class="a" style="left:995px;top:189px;width:18px;height:473px;background:linear-gradient(90deg,#f3f1ec,#fefefb)"></div>
<div class="a sbb" style="left:996px;top:189px;width:15px;height:16px"></div>
<svg class="a" style="left:999px;top:194px" width="9" height="6"><path d="M0.5 5 L4.5 1 L8.5 5" stroke="#4d6185" stroke-width="2" fill="none"/></svg>
<div class="a sbb" style="left:996px;top:207px;width:15px;height:177px;background:linear-gradient(90deg,#d2defc,#c6d5fb 50%,#b9ccf8)"></div>
<svg class="a" style="left:1000px;top:292px" width="8" height="8"><path d="M0 0h7v1H0zM0 2h7v1H0zM0 4h7v1H0zM0 6h7v1H0z" fill="#eef4fe"/><path d="M1 1h7v1H1zM1 3h7v1H1zM1 5h7v1H1zM1 7h7v1H1z" fill="#8cb0f8"/></svg>
<div class="a sbb" style="left:996px;top:645px;width:15px;height:16px"></div>
<svg class="a" style="left:999px;top:650px" width="9" height="6"><path d="M0.5 1 L4.5 5 L8.5 1" stroke="#4d6185" stroke-width="2" fill="none"/></svg>
<!-- h scrollbar -->
<div class="a" style="left:12px;top:662px;width:983px;height:17px;background:linear-gradient(#f3f1ec,#fefefb)"></div>
<div class="a sbb" style="left:13px;top:663px;width:16px;height:15px"></div>
<svg class="a" style="left:18px;top:666px" width="6" height="9"><path d="M5 0.5 L1 4.5 L5 8.5" stroke="#4d6185" stroke-width="2" fill="none"/></svg>
<div class="a sbb" style="left:30px;top:663px;width:895px;height:15px;background:linear-gradient(#d2defc,#c6d5fb 50%,#b9ccf8)"></div>
<svg class="a" style="left:473px;top:667px" width="8" height="7"><path d="M0 0h1v7H0zM2 0h1v7H2zM4 0h1v7H4zM6 0h1v7H6z" fill="#eef4fe"/><path d="M1 1h1v7H1zM3 1h1v7H3zM5 1h1v7H5zM7 1h1v7H7z" fill="#8cb0f8"/></svg>
<div class="a sbb" style="left:979px;top:663px;width:16px;height:15px"></div>
<svg class="a" style="left:984px;top:666px" width="6" height="9"><path d="M1 0.5 L5 4.5 L1 8.5" stroke="#4d6185" stroke-width="2" fill="none"/></svg>
<div class="a" style="left:995px;top:662px;width:18px;height:18px;background:#ece9d8"></div>
<svg class="a" style="left:1001px;top:667px" width="12" height="12"><path d="M8 0h2v2H8zM4 4h2v2H4zM8 4h2v2H8zM0 8h2v2H0zM4 8h2v2H4zM8 8h2v2H8z" fill="#b4ae9a"/><path d="M10 2h1v1h-1zM6 6h1v1H6zM10 6h1v1h-1zM2 10h1v1H2zM6 10h1v1H6zM10 10h1v1h-1z" fill="#fff"/></svg>
<!-- cursor circle -->
<svg class="a" style="left:106px;top:352px" width="22" height="22"><circle cx="11" cy="11" r="9.5" stroke="#e8a020" stroke-width="1.2" fill="none"/></svg>

<!-- INFO dialog -->
<div class="a" style="left:-10px;top:117px;width:211px;height:237px;background:linear-gradient(90deg,#6a7ad8,#7b8be0 50%,#5a68cf);border-radius:0 7px 0 0"></div>
<div class="a" style="left:-10px;top:117px;width:211px;height:29px;border-radius:0 7px 0 0;background:linear-gradient(#9fb6ec 0,#8aa5e6 2px,#7d9ae0 5px,#7a96df 13px,#7c9de3 19px,#80a5e7 24px,#7d9fe4 27px,#6f8bdc 29px)"></div>
<div class="a tbtn x" style="left:175px;top:122px"><svg class="a" style="left:3px;top:3px" width="13" height="13"><path d="M2 2 L11 11 M11 2 L2 11" stroke="#fff" stroke-width="2"/></svg></div>
<div class="a" style="left:0;top:146px;width:198px;height:205px;background:#ece9d8"></div>
<div class="a" style="left:-5px;top:154px;width:196px;height:164px;border-top:1px solid #aca899;border-left:1px solid #aca899;border-right:1px solid #fff;border-bottom:1px solid #fff"></div>
<div class="a nw" style="left:-11px;top:156px;line-height:13px">( 0, 0 )-( 1039, 1159 )</div>
<div class="a nw" style="left:55px;top:168px;line-height:13px">1557</div>
<div class="a nw" style="left:-4px;top:181px;line-height:13px">ts</div>
<div class="a nw" style="left:57px;top:181px;line-height:13px">1206400</div>
<div class="a nw" style="left:-1px;top:208px;line-height:13px">Mono</div>
<div class="a nw" style="left:-5px;top:220px;line-height:13px">355.600</div>
<div class="a nw" style="left:-6px;top:233px;line-height:13px">147.800</div>
<div class="a nw" style="left:-6px;top:246px;line-height:13px">165.864</div>
<div class="a nw" style="left:1px;top:259px;line-height:13px">2.218</div>
<div class="a nw" style="left:-13px;top:272px;line-height:13px">1.045843e7</div>
<div class="a sunk" style="left:-20px;top:325px;width:63px;height:21px;background:#fff"></div>
<div class="a ddb" style="left:26px;top:327px;width:16px;height:17px"></div>
<svg class="a" style="left:30px;top:333px" width="8" height="5"><path d="M0 0h8L4 4.5z" fill="#000"/></svg>
<div class="a sunk" style="left:51px;top:329px;width:13px;height:13px;background:#fff"></div>
<div class="a nw" style="left:69px;top:323px;line-height:13px">Display in<br>Arcsec</div>
<div class="a cbtn" style="left:124px;top:325px;width:67px;height:23px;line-height:20px">Calibrate &gt;&gt;</div>

<!-- CLONE TOOL dialog -->
<div class="a" style="left:265px;top:149px;width:302px;height:204px;border-radius:8px 8px 0 0;background:linear-gradient(90deg,#0019cf,#0831d9 3px,#0c45f0 calc(100% - 3px),#001ea8)"></div><div class="a" style="left:268px;top:350px;width:296px;height:3px;background:linear-gradient(#0c48f0,#0530c8 50%,#001a98)"></div>
<div class="a" style="left:265px;top:149px;width:302px;height:28px;border-radius:8px 8px 0 0;background:linear-gradient(#3d95ff 0,#2a7af5 1px,#0a5fe6 3px,#0058ee 8px,#0054e3 15px,#0058ee 20px,#0a62f0 24px,#0758e8 26px,#0049d8 28px)"></div>
<div class="a tt nw" style="left:272px;top:157px;color:#fff;text-shadow:1px 1px #0a1e8c;font-size:13.5px;letter-spacing:-0.45px">Clone Tool</div>
<div class="a" style="left:518px;top:154px;width:21px;height:21px;border:1px solid #fff;border-radius:3px;background:radial-gradient(circle at 25% 25%,#6aa0ff,#2868f0 60%,#1a55e0)"></div>
<div class="a" style="left:523px;top:155px;color:#fff;font-weight:bold;font-size:17px">?</div>
<div class="a" style="left:541px;top:154px;width:21px;height:21px;border:1px solid #fff;border-radius:3px;background:radial-gradient(circle at 25% 25%,#f08a60,#e25a2a 60%,#c8401a)"></div>
<svg class="a" style="left:545px;top:158px" width="13" height="13"><path d="M2 2 L11 11 M11 2 L2 11" stroke="#fff" stroke-width="2"/></svg>
<div class="a" style="left:268px;top:178px;width:296px;height:172px;background:#ece9d8"></div>
<div class="a nw" style="left:277px;top:187px">Source Image</div>
<div class="a nw" style="left:427px;top:187px">Source Image State</div>
<div class="a sunk" style="left:276px;top:203px;width:141px;height:19px;background:#fff"></div>
<div class="a" style="left:279px;top:205px;width:120px;height:15px;background:#316ac5"></div>
<div class="a nw" style="left:280px;top:206px;color:#fff">red201005130XXX</div>
<div class="a ddb" style="left:400px;top:205px;width:16px;height:16px"></div>
<svg class="a" style="left:404px;top:211px" width="8" height="5"><path d="M0 0h8L4 4.5z" fill="#000"/></svg>
<div class="a sunk" style="left:427px;top:203px;width:126px;height:19px;background:#ece9d8"></div>
<div class="a nw" style="left:431px;top:206px;color:#aca899">Current image</div>
<div class="a ddb" style="left:536px;top:205px;width:16px;height:16px"></div>
<svg class="a" style="left:540px;top:211px" width="8" height="5"><path d="M0 0h8L4 4.5z" fill="#aca899"/></svg>
<div class="a nw" style="left:277px;top:233px">Source region coordinates</div>
<div class="a sunk" style="left:276px;top:248px;width:141px;height:20px;background:#fff"></div>
<div class="a nw" style="left:280px;top:252px">Offset from mouse cursor</div>
<div class="a ddb" style="left:400px;top:250px;width:16px;height:16px"></div>
<svg class="a" style="left:404px;top:256px" width="8" height="5"><path d="M0 0h8L4 4.5z" fill="#000"/></svg>
<div class="a cbtn" style="left:427px;top:248px;width:33px;height:20px;line-height:17px">Set</div>
<div class="a cbtn def" style="left:276px;top:287px;width:65px;height:20px;line-height:18px">Undo Last</div>
<div class="a cbtn dis" style="left:348px;top:287px;width:65px;height:20px;line-height:18px">Redo Last</div>
<div class="a cbtn" style="left:420px;top:287px;width:65px;height:20px;line-height:18px">Undo All</div>
<div class="a cbtn dis" style="left:492px;top:287px;width:65px;height:20px;line-height:18px">Redo All</div>
<div class="a cbtn" style="left:375px;top:317px;width:75px;height:24px;line-height:22px">Close</div>

<!-- status bar -->
<div class="a" style="left:0;top:691px;width:1024px;height:17px;background:#ece9d8"></div>
<div class="a nw" style="left:3px;top:694px">For Help, press F1</div>
<div class="a sp" style="left:572px;top:693px;width:58px"></div>
<div class="a sp" style="left:631px;top:693px;width:40px"></div>
<div class="a sp" style="left:673px;top:693px;width:67px"></div>
<div class="a sp" style="left:741px;top:693px;width:69px"></div>
<div class="a sp" style="left:811px;top:693px;width:213px"></div>
<div class="a nw" style="left:574px;top:695px">1040x1160</div>
<div class="a nw" style="left:634px;top:695px">100%</div>

<!-- taskbar -->
<div class="a" style="left:0;top:708px;width:1024px;height:60px;background:linear-gradient(#2a5ad0 0,#2a5ad0 1px,#4d8fea 1px,#4a8ae8 3px,#2a62dc 4px,#2258d6 9px,#245cda 40px,#265fdc 56px,#1e4cbc 58px,#1941a5 60px)"></div>
<div class="a" style="left:0;top:708px;width:96px;height:30px;border-radius:0 12px 12px 0;background:linear-gradient(#5cb85c 0,#3c9a3c 3px,#37933a 20px,#2f8232 27px,#2c6e2e 30px)"></div>
<svg class="a" style="left:10px;top:713px" width="20" height="19" viewBox="0 0 20 19">
 <path d="M2 2c2-1 4-1 7 0l-1 7c-3-1-5-1-7 0z" fill="#f05a22"/>
 <path d="M10 1c2 1 4 1 8 0l-1 7c-3 1-5 1-8 0z" fill="#7fbb40"/>
 <path d="M1 10c2-1 4-1 7 0l-1 7c-3-1-5-1-7 0z" fill="#4a8ad8"/>
 <path d="M9 10c2 1 4 1 8 0l-1 7c-3 1-5 1-8 0z" fill="#fcc214"/>
</svg>
<div class="a nw" style="left:35px;top:712px;color:#fff;font-weight:bold;font-style:italic;font-size:17px;text-shadow:1px 1px 1px #1a4a1a">пуск</div>
<div class="a" style="left:191px;top:712px;width:158px;height:23px;border-radius:3px;background:linear-gradient(#4a8af5,#3c81f3 50%,#3575ec)"></div>
<div class="a" style="left:351px;top:712px;width:158px;height:23px;border-radius:3px;background:#1e4dc0;box-shadow:inset 1px 1px #1840a8"></div>
<svg class="a" style="left:108px;top:715px" width="17" height="17" viewBox="0 0 17 17"><path d="M1 1h7v5l-3 3H3L1 6z" fill="#d0d0d0" stroke="#000"/><rect x="2" y="1" width="5" height="2" fill="#c8c040"/><path d="M4 9c0 5 4 5 6 2s5-2 5 5" stroke="#000" stroke-width="2.6" fill="none"/><path d="M4 9c0 5 4 5 6 2s5-2 5 5" stroke="#e0e0e0" stroke-width="1.2" fill="none"/></svg>
<svg class="a" style="left:131px;top:715px" width="16" height="16"><rect x="0.5" y="0.5" width="15" height="15" fill="#fff" stroke="#3a8a3a"/><rect x="1" y="1" width="14" height="14" fill="none" stroke="#6cb06c"/><path d="M4 4l8 8M12 4l-8 8" stroke="#2a8a2a" stroke-width="2.2"/><path d="M3 6h3M10 10h3" stroke="#2a8a2a"/></svg>
<svg class="a" style="left:155px;top:715px" width="13" height="16"><path d="M2 8h9l-1 7H3z" fill="#9ad0a0" opacity=".9"/><path d="M3 14L2 2M6 14L6 3M9 14l2-11" stroke="#e04020" stroke-width="1.6"/><path d="M5 14L4 3" stroke="#f0c020" stroke-width="1.4"/><path d="M8 14l1-11" stroke="#4080e0" stroke-width="1.4"/><circle cx="2" cy="1.5" r="1.5" fill="#e05a20"/></svg>
<svg class="a" style="left:108px;top:746px" width="16" height="12"><path d="M0 6l4-5h3l2 3-4 7H3z" fill="#7cc040"/><path d="M16 6l-4 5H9l-2-3 4-7h2z" fill="#40a8e0"/><path d="M5 11l7-10h2l-7 10z" fill="#e84a20"/><path d="M2 8l3-4 2 1" fill="#f8c020"/><circle cx="4" cy="6" r="1.3" fill="#2458d8"/><circle cx="12" cy="6" r="1.3" fill="#2458d8"/><path d="M9 8l3 3h2l-2-3z" fill="#f8c020"/></svg>
<svg class="a" style="left:131px;top:745px" width="16" height="16"><circle cx="8.5" cy="8" r="6.5" fill="#3070c8"/><circle cx="10" cy="6" r="3" fill="#6ab0f0"/><path d="M2 3c-2 5 0 12 7 12 4 0 7-3 7-7 0 3-3 5-6 5-3 0-5-2-5-4 2 1 4 0 4-2-2 0-3-1-3-2 0-2 2-2 2-3-2 0-4 1-4 2z" fill="#e87818"/><path d="M2 3l2 2" stroke="#f0a030"/></svg>
<svg class="a" style="left:154px;top:746px" width="16" height="16"><rect x="1" y="0" width="10" height="10" fill="#40b8f0"/><rect x="8" y="2" width="7" height="9" fill="#5080d0" stroke="#000" stroke-width=".6"/><rect x="5" y="9" width="9" height="6" fill="#d02020" stroke="#000" stroke-width=".6"/><path d="M0 13l5-3 3 1" stroke="#fff" fill="none" stroke-width=".8"/><path d="M3 4h8M9 3v10" stroke="#d0c0a0" stroke-width=".8"/><rect x="0" y="13" width="6" height="2" fill="#000"/></svg>
<svg class="a" style="left:200px;top:715px" width="16" height="16"><path d="M4 1h7l3 3v11H4z" fill="#e8eef8" stroke="#1a2a6a" stroke-width=".8"/><path d="M6 11h6M6 13h6" stroke="#8aa0c8"/><rect x="1" y="2" width="9" height="9" fill="#fff" stroke="#1a3a9a"/><path d="M2 4l1.5 6 1.5-4 1.5 4 1.5-6" stroke="#1a3a9a" stroke-width="1.3" fill="none"/></svg>
<svg class="a" style="left:361px;top:716px" width="16" height="17" viewBox="0 0 16 17"><path d="M1.5 3 L4 1 L12.5 9.5 L10 12 Z" fill="#fff" stroke="#000" stroke-width="1.2"/><path d="M6 10 L3 15 M6 10 L9 15 M6 10 V15 M2 15 H10" stroke="#000" stroke-width="1.5"/><path d="M12.5 0.5c2 1 2 3 0 4.5" stroke="#ff0" stroke-width="1.5" fill="none"/></svg>
<div class="a nw" style="left:220px;top:717px;color:#fff;letter-spacing:0.15px">диплом 19.06.2010 ...</div>
<div class="a nw" style="left:380px;top:717px;color:#fff;letter-spacing:0.15px">MaxIm DL 4 - red201...</div>
<div class="a" style="left:929px;top:708px;width:95px;height:60px;background:linear-gradient(90deg,#0c59b9 0,#139bec 1px,#1291e6 30%,#0f8ee4 100%);border-top:1px solid #2aa6f3"></div>
<div class="a nw" style="left:963px;top:713px;color:#fff;letter-spacing:0.1px">11:56</div>
<div class="a nw" style="left:956px;top:732px;color:#fff;letter-spacing:0.3px">четверг</div>
<div class="a nw" style="left:949px;top:751px;color:#fff;letter-spacing:0.2px">20.05.2010</div>
<div class="a" style="left:902px;top:730px;width:14px;height:16px;background:#3565d8"></div>
<div class="a nw" style="left:902px;top:732px;color:#fff">EN</div>
<div class="a" style="left:919px;top:729px;width:19px;height:19px;border-radius:50%;background:radial-gradient(circle at 40% 35%,#5ab0ff,#1a6ee0 70%);border:1px solid #c8dcf8"></div>
<svg class="a" style="left:924px;top:733px" width="9" height="11"><path d="M6 1.5 L2 5.5 L6 9.5" stroke="#fff" stroke-width="2.3" fill="none"/></svg>
<script>
(function(){
var c=document.getElementById('cv');if(!c||!c.getContext)return;
var ctx=c.getContext('2d');var W=983,H=473;
var img=ctx.createImageData(W,H);var d=img.data;
var s=2463534242;function r(){s^=s<<13;s>>>=0;s^=s>>>17;s^=s<<5;s>>>=0;return s/4294967296;}
function bri(X,Y){var dl=X-(490+0.3*(662-Y));var dr=X-(500+0.25*(662-Y));var ex=1;
 if(dl<0){var t=-dl/175;ex=Math.exp(-t*t*t);}if(dr>0){ex=Math.min(ex,Math.exp(-dr*dr/57600));}
 var dy=Y-690;var y0=600-0.12*(X-500);
 var B=ex*(0.82/(1+Math.exp(-(Y-y0)/36))+0.085*Math.exp(-dy*dy/90000));
 if(X>790&&Y>436){B*=0.18;}
 return B;}
for(var y=0;y<H;y++){var Y=y+189;var pv=0;for(var x=0;x<W;x++){var X=x+12;
 var b=bri(X,Y);var v=0;
 if(pv>0&&r()<0.03+0.3*b){v=pv*(0.5+0.5*r());}
 else if(r()<0.0105+0.01*y/H){v=255*(r()<0.5?0.12+0.28*r():0.55+0.45*r());}
 else if(b>0.002){var p=Math.min(1,2.2*b);if(r()<p){var q=r();var w=Math.max(0,Math.min(1,(b-0.15)/0.35));v=255*Math.min(1,(b/p)*((1-w)*2.6*q*q+w*(0.3+1.6*q)));}}
 pv=v;
 var i=(y*W+x)*4;d[i]=d[i+1]=d[i+2]=v;d[i+3]=255;}}
function plot(X,Y,a){var x=Math.round(X)-12,y=Math.round(Y)-189;if(x<0||y<0||x>=W||y>=H)return;var i=(y*W+x)*4;var v=Math.max(d[i],a*255);if(v>255)v=255;d[i]=d[i+1]=d[i+2]=v;}
function streak(x1,y1,x2,y2,a,dens){var n=Math.abs(y2-y1);for(var k=0;k<n;k++){var t=k/n;if(r()<dens){var X=x1+(x2-x1)*t,Y=y1+(y2-y1)*t;plot(X,Y,a*(0.7+0.3*r()));if(r()<0.5)plot(X+1,Y,a*(0.4+0.4*r()));if(a>0.6&&r()<0.4)plot(X-1,Y,a*(0.3+0.5*r()));}}}
var L=[[882,190,859,290,.8],[717,230,687,345,.7],[696,235,669,339,.75],[378,390,355,455,.8],[211,522,184,629,.9],[205,560,190,610,.6],[16,525,13,548,1],
[470,600,452,662,.9],[540,580,520,662,.8],[765,600,752,641,.7],[935,425,931,442,1],[952,430,948,446,1],[740,365,722,432,.6],[860,330,835,420,.5],[750,339,734,412,.6]];
for(var k=0;k<L.length;k++){var l=L[k];streak(l[0],l[1],l[2],l[3],l[4],0.7);}
for(var k=0;k<220;k++){var X=30+r()*960,Y=200+r()*470;var g=bri(X,Y);if(r()>0.008+g*2.2)continue;var len=30+r()*110;var sl=0.26+r()*0.1;
 streak(X,Y,X-len*sl,Y+len,0.45+0.5*r(),0.55+0.35*r());}
function col(X,Y0,f){for(var Y=Y0;Y<662;Y++){var i=((Y-189)*W+(X-12))*4;var v=d[i]*f;d[i]=d[i+1]=d[i+2]=v;}}
col(600,505,0.1);col(623,464,0.1);col(789,436,0.15);col(790,436,0.1);col(791,436,0.2);
ctx.putImageData(img,0,0);
ctx.fillStyle='#fff';
[[612,191],[743,191],[870,191],[255,190],[917,497],[934,503]].forEach(function(p){ctx.fillRect(p[0]-12,p[1]-189,3,3);});
}());
</script>

</body></html>
